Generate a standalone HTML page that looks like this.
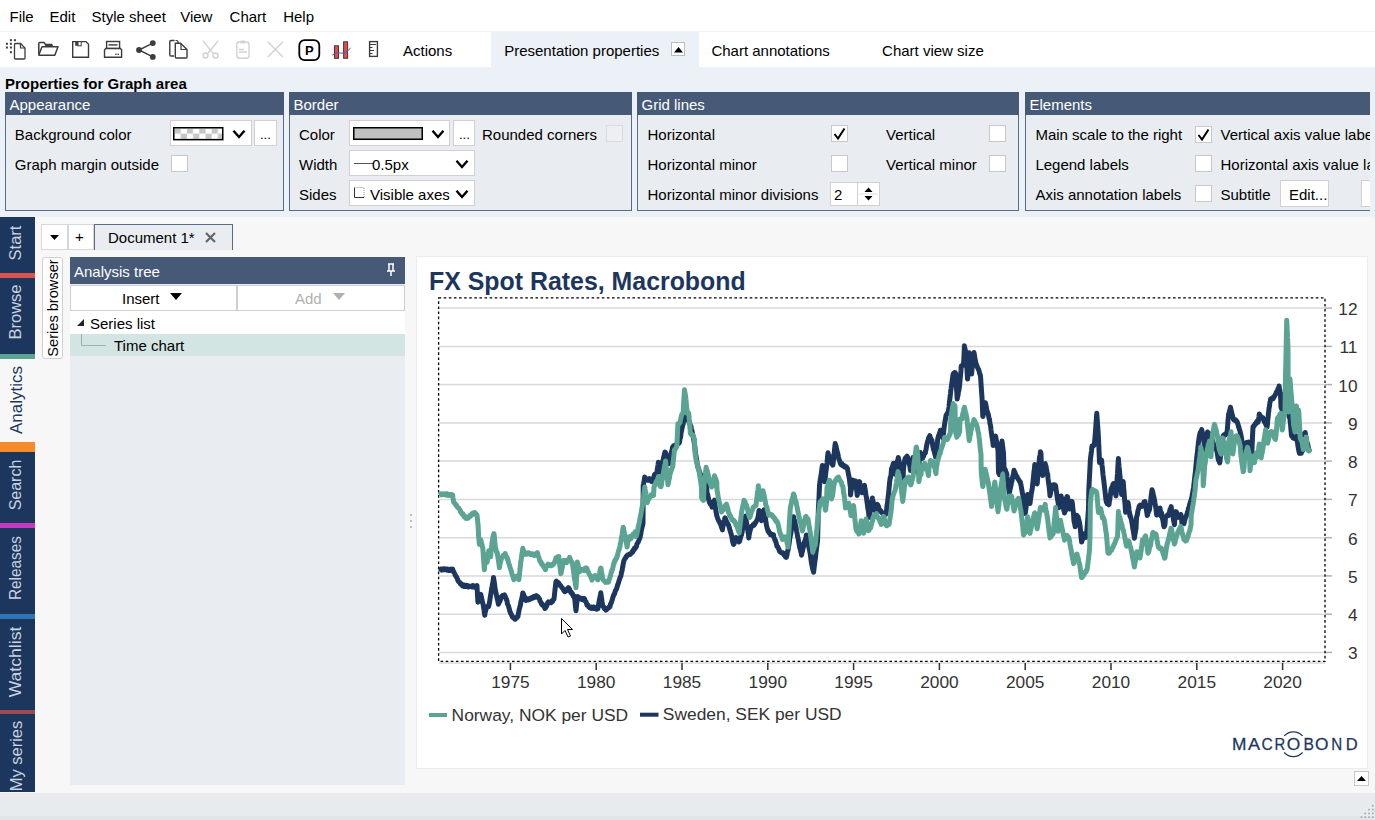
<!DOCTYPE html><html><head><meta charset="utf-8"><style>
html,body{margin:0;padding:0}
body{width:1375px;height:820px;position:relative;overflow:hidden;background:#F7F7F7;font-family:"Liberation Sans",sans-serif;font-size:15px;color:#000}
</style></head><body>
<div style="position:absolute;left:0px;top:0px;width:1375px;height:32px;background:#fff"></div>
<div style="position:absolute;left:0px;top:31px;width:1375px;height:1px;background:#f2f2f2"></div>
<div style="position:absolute;left:0px;top:32px;width:1375px;height:35px;background:#fff"></div>
<div style="position:absolute;left:0px;top:67px;width:1375px;height:150px;background:#ECF0F7"></div>
<div style="position:absolute;left:491px;top:32px;width:208px;height:35px;background:#ECF0F7"></div>
<div style="position:absolute;left:0px;top:793px;width:1375px;height:27px;background:#E8EBEE"></div>
<div style="position:absolute;left:0px;top:816px;width:1375px;height:4px;background:#E2E5E8"></div>
<div style="position:absolute;left:9.50px;top:9.10px;font-size:15px;line-height:15px;font-weight:normal;color:#000;white-space:pre;">File</div>
<div style="position:absolute;left:49.50px;top:9.10px;font-size:15px;line-height:15px;font-weight:normal;color:#000;white-space:pre;">Edit</div>
<div style="position:absolute;left:91.60px;top:9.10px;font-size:15px;line-height:15px;font-weight:normal;color:#000;white-space:pre;">Style sheet</div>
<div style="position:absolute;left:180.20px;top:9.10px;font-size:15px;line-height:15px;font-weight:normal;color:#000;white-space:pre;">View</div>
<div style="position:absolute;left:229.60px;top:9.10px;font-size:15px;line-height:15px;font-weight:normal;color:#000;white-space:pre;">Chart</div>
<div style="position:absolute;left:283.20px;top:9.10px;font-size:15px;line-height:15px;font-weight:normal;color:#000;white-space:pre;">Help</div>
<div style="position:absolute;left:403.00px;top:43.30px;font-size:15px;line-height:15px;font-weight:normal;color:#000;white-space:pre;">Actions</div>
<div style="position:absolute;left:504.20px;top:42.90px;font-size:15px;line-height:15px;font-weight:normal;color:#000;white-space:pre;">Presentation properties</div>
<div style="position:absolute;left:671px;top:42px;width:14px;height:14px;background:#fff;border:1px solid #bbb;box-sizing:border-box"></div>
<svg style="position:absolute;left:671px;top:42px" width="15" height="15"><path d="M3 10.5 L7.5 5 L12 10.5 Z" fill="#000"/></svg>
<div style="position:absolute;left:711.40px;top:43.20px;font-size:15px;line-height:15px;font-weight:normal;color:#000;white-space:pre;">Chart annotations</div>
<div style="position:absolute;left:882.10px;top:43.20px;font-size:15px;line-height:15px;font-weight:normal;color:#000;white-space:pre;">Chart view size</div>
<div style="position:absolute;left:5.00px;top:75.80px;font-size:15px;line-height:15px;font-weight:bold;color:#000;white-space:pre;">Properties for Graph area</div>
<div style="position:absolute;left:5px;top:92px;width:279px;height:119px;background:#E9ECF0;border:1px solid #5B6B86;box-sizing:border-box"></div>
<div style="position:absolute;left:5px;top:92px;width:279px;height:23px;background:#465A78"></div>
<div style="position:absolute;left:9.50px;top:97.00px;font-size:15px;line-height:15px;font-weight:normal;color:#fff;white-space:pre;">Appearance</div>
<div style="position:absolute;left:289px;top:92px;width:343px;height:119px;background:#E9ECF0;border:1px solid #5B6B86;box-sizing:border-box"></div>
<div style="position:absolute;left:289px;top:92px;width:343px;height:23px;background:#465A78"></div>
<div style="position:absolute;left:293.50px;top:97.00px;font-size:15px;line-height:15px;font-weight:normal;color:#fff;white-space:pre;">Border</div>
<div style="position:absolute;left:637px;top:92px;width:382px;height:119px;background:#E9ECF0;border:1px solid #5B6B86;box-sizing:border-box"></div>
<div style="position:absolute;left:637px;top:92px;width:382px;height:23px;background:#465A78"></div>
<div style="position:absolute;left:641.50px;top:97.00px;font-size:15px;line-height:15px;font-weight:normal;color:#fff;white-space:pre;">Grid lines</div>
<div style="position:absolute;left:1025px;top:92px;width:350px;height:119px;background:#E9ECF0;border:1px solid #5B6B86;box-sizing:border-box"></div>
<div style="position:absolute;left:1025px;top:92px;width:350px;height:23px;background:#465A78"></div>
<div style="position:absolute;left:1029.50px;top:97.00px;font-size:15px;line-height:15px;font-weight:normal;color:#fff;white-space:pre;">Elements</div>
<div style="position:absolute;left:1370px;top:67px;width:5px;height:150px;background:#ECF0F7"></div>
<div style="position:absolute;left:14.80px;top:127.30px;font-size:15px;line-height:15px;font-weight:normal;color:#000;white-space:pre;">Background color</div>
<div style="position:absolute;left:14.80px;top:156.90px;font-size:15px;line-height:15px;font-weight:normal;color:#000;white-space:pre;">Graph margin outside</div>
<div style="position:absolute;left:170px;top:120px;width:82px;height:26px;background:#fff;border:1px solid #d0d0d0;box-sizing:border-box"></div>
<svg style="position:absolute;left:173px;top:127px" width="51" height="14"><defs><pattern id="chk" x="1.5" y="1.5" width="12.4" height="10.4" patternUnits="userSpaceOnUse"><rect width="12.4" height="10.4" fill="#fff"/><rect x="0" y="0" width="6.2" height="5.2" fill="#c6c6c6"/><rect x="6.2" y="5.2" width="6.2" height="5.2" fill="#c6c6c6"/></pattern></defs><rect x="0.75" y="0.75" width="49" height="11.9" fill="url(#chk)" stroke="#000" stroke-width="1.5"/></svg>
<svg style="position:absolute;left:232px;top:129px" width="14" height="11"><path d="M1.5 1.8 L7 8 L12.5 1.8" stroke="#000" stroke-width="2.4" fill="none"/></svg>
<div style="position:absolute;left:254px;top:120px;width:23px;height:26px;background:#fff;border:1px solid #d0d0d0;box-sizing:border-box"></div>
<div style="position:absolute;left:260.00px;top:128.00px;font-size:13px;line-height:13px;font-weight:normal;color:#000;white-space:pre;">...</div>
<div style="position:absolute;left:171px;top:155px;width:17px;height:17px;background:#fff;border:1px solid #c8c8c8;box-sizing:border-box"></div>
<div style="position:absolute;left:299.00px;top:127.30px;font-size:15px;line-height:15px;font-weight:normal;color:#000;white-space:pre;">Color</div>
<div style="position:absolute;left:299.00px;top:157.30px;font-size:15px;line-height:15px;font-weight:normal;color:#000;white-space:pre;">Width</div>
<div style="position:absolute;left:299.00px;top:187.30px;font-size:15px;line-height:15px;font-weight:normal;color:#000;white-space:pre;">Sides</div>
<div style="position:absolute;left:349px;top:120px;width:101px;height:26px;background:#fff;border:1px solid #d0d0d0;box-sizing:border-box"></div>
<svg style="position:absolute;left:353px;top:127px" width="70" height="13"><rect x="0.75" y="0.75" width="68.5" height="11.5" fill="#c0c0c0" stroke="#000" stroke-width="1.5"/></svg>
<svg style="position:absolute;left:431px;top:129px" width="14" height="11"><path d="M1.5 1.8 L7 8 L12.5 1.8" stroke="#000" stroke-width="2.4" fill="none"/></svg>
<div style="position:absolute;left:453px;top:120px;width:22px;height:26px;background:#fff;border:1px solid #d0d0d0;box-sizing:border-box"></div>
<div style="position:absolute;left:459.00px;top:128.00px;font-size:13px;line-height:13px;font-weight:normal;color:#000;white-space:pre;">...</div>
<div style="position:absolute;left:349px;top:150px;width:126px;height:26px;background:#fff;border:1px solid #d0d0d0;box-sizing:border-box"></div>
<div style="position:absolute;left:354px;top:163px;width:20px;height:1px;background:#555"></div>
<div style="position:absolute;left:372.00px;top:157.30px;font-size:15px;line-height:15px;font-weight:normal;color:#000;white-space:pre;">0.5px</div>
<svg style="position:absolute;left:455px;top:159px" width="14" height="11"><path d="M1.5 1.8 L7 8 L12.5 1.8" stroke="#000" stroke-width="2.4" fill="none"/></svg>
<div style="position:absolute;left:349px;top:180px;width:126px;height:26px;background:#fff;border:1px solid #d0d0d0;box-sizing:border-box"></div>
<svg style="position:absolute;left:353px;top:187px" width="12" height="12"><path d="M1.5 0.5 V10.5 H11" stroke="#333" stroke-width="1" fill="none"/><path d="M1.5 0.5 H11 V10.5" stroke="#999" stroke-width="1" stroke-dasharray="1 1" fill="none"/></svg>
<div style="position:absolute;left:370.00px;top:187.30px;font-size:15px;line-height:15px;font-weight:normal;color:#000;white-space:pre;">Visible axes</div>
<svg style="position:absolute;left:455px;top:189px" width="14" height="11"><path d="M1.5 1.8 L7 8 L12.5 1.8" stroke="#000" stroke-width="2.4" fill="none"/></svg>
<div style="position:absolute;left:482.00px;top:127.30px;font-size:15px;line-height:15px;font-weight:normal;color:#000;white-space:pre;">Rounded corners</div>
<div style="position:absolute;left:606px;top:125px;width:17px;height:17px;background:#eceff3;border:1px solid #dcdcdc;box-sizing:border-box"></div>
<div style="position:absolute;left:647.50px;top:127.30px;font-size:15px;line-height:15px;font-weight:normal;color:#000;white-space:pre;">Horizontal</div>
<div style="position:absolute;left:647.50px;top:157.30px;font-size:15px;line-height:15px;font-weight:normal;color:#000;white-space:pre;">Horizontal minor</div>
<div style="position:absolute;left:647.50px;top:187.30px;font-size:15px;line-height:15px;font-weight:normal;color:#000;white-space:pre;">Horizontal minor divisions</div>
<div style="position:absolute;left:831px;top:125px;width:17px;height:17px;background:#fff;border:1px solid #c8c8c8;box-sizing:border-box"></div>
<svg style="position:absolute;left:831px;top:125px" width="17" height="17"><path d="M3.5 9 L7 13.5 L13.5 3.5" stroke="#000" stroke-width="2" fill="none"/></svg>
<div style="position:absolute;left:831px;top:155px;width:17px;height:17px;background:#fff;border:1px solid #c8c8c8;box-sizing:border-box"></div>
<div style="position:absolute;left:886.00px;top:127.30px;font-size:15px;line-height:15px;font-weight:normal;color:#000;white-space:pre;">Vertical</div>
<div style="position:absolute;left:886.00px;top:157.30px;font-size:15px;line-height:15px;font-weight:normal;color:#000;white-space:pre;">Vertical minor</div>
<div style="position:absolute;left:989px;top:125px;width:17px;height:17px;background:#fff;border:1px solid #c8c8c8;box-sizing:border-box"></div>
<div style="position:absolute;left:989px;top:155px;width:17px;height:17px;background:#fff;border:1px solid #c8c8c8;box-sizing:border-box"></div>
<div style="position:absolute;left:830px;top:182px;width:28px;height:24px;background:#fff;border:1px solid #d0d0d0;box-sizing:border-box"></div>
<div style="position:absolute;left:834.00px;top:187.30px;font-size:15px;line-height:15px;font-weight:normal;color:#000;white-space:pre;">2</div>
<div style="position:absolute;left:857px;top:182px;width:23px;height:24px;background:#fff;border:1px solid #d0d0d0;box-sizing:border-box"></div>
<svg style="position:absolute;left:857px;top:182px" width="23" height="24"><path d="M7.5 10 L11.5 5.5 L15.5 10 Z M7.5 14 L11.5 18.5 L15.5 14 Z" fill="#000"/><path d="M2 12 H21" stroke="#ddd"/></svg>
<div style="position:absolute;left:1035.40px;top:127.30px;font-size:15px;line-height:15px;font-weight:normal;color:#000;white-space:pre;">Main scale to the right</div>
<div style="position:absolute;left:1035.40px;top:157.30px;font-size:15px;line-height:15px;font-weight:normal;color:#000;white-space:pre;">Legend labels</div>
<div style="position:absolute;left:1035.40px;top:187.30px;font-size:15px;line-height:15px;font-weight:normal;color:#000;white-space:pre;">Axis annotation labels</div>
<div style="position:absolute;left:1195px;top:126px;width:17px;height:17px;background:#fff;border:1px solid #c8c8c8;box-sizing:border-box"></div>
<svg style="position:absolute;left:1195px;top:126px" width="17" height="17"><path d="M3.5 9 L7 13.5 L13.5 3.5" stroke="#000" stroke-width="2" fill="none"/></svg>
<div style="position:absolute;left:1195px;top:155px;width:17px;height:17px;background:#fff;border:1px solid #c8c8c8;box-sizing:border-box"></div>
<div style="position:absolute;left:1195px;top:185px;width:17px;height:17px;background:#fff;border:1px solid #c8c8c8;box-sizing:border-box"></div>
<div style="position:absolute;left:1220.50px;top:127.30px;font-size:15px;line-height:15px;font-weight:normal;color:#000;white-space:pre;">Vertical axis value labels</div>
<div style="position:absolute;left:1220.50px;top:157.30px;font-size:15px;line-height:15px;font-weight:normal;color:#000;white-space:pre;">Horizontal axis value labels</div>
<div style="position:absolute;left:1220.50px;top:187.30px;font-size:15px;line-height:15px;font-weight:normal;color:#000;white-space:pre;">Subtitle</div>
<div style="position:absolute;left:1280px;top:180px;width:49px;height:27px;background:#fff;border:1px solid #d0d0d0;box-sizing:border-box"></div>
<div style="position:absolute;left:1289.00px;top:187.30px;font-size:15px;line-height:15px;font-weight:normal;color:#000;white-space:pre;">Edit...</div>
<div style="position:absolute;left:1361px;top:180px;width:20px;height:27px;background:#fff;border:1px solid #d0d0d0;box-sizing:border-box"></div>
<div style="position:absolute;left:1370px;top:88px;width:5px;height:130px;background:#ECF0F7"></div>
<svg style="position:absolute;left:0;top:32px" width="400" height="35" viewBox="0 32 400 35">
<g fill="#3c3c3c">
<rect x="9.9" y="39.2" width="2" height="2"/><rect x="13.9" y="39.2" width="2" height="2"/>
<rect x="5.9" y="42.8" width="2" height="2"/><rect x="9.9" y="42.8" width="2" height="2"/>
<rect x="5.9" y="46.5" width="2" height="2"/><rect x="9.9" y="46.5" width="2" height="2"/>
<rect x="9.9" y="51.2" width="2" height="2"/>
</g>
<path d="M14.5 44.5 Q14.5 43.5 15.5 43.5 H20.5 L25 48 V58 Q25 59 24 59 H15.5 Q14.5 59 14.5 58 Z" fill="#fff" stroke="#3c3c3c" stroke-width="1.3"/>
<path d="M20.5 43.5 V48 H25" fill="none" stroke="#3c3c3c" stroke-width="1.2"/>
<path d="M38.8 54.5 V43.5 Q38.8 42.6 39.7 42.6 H44 L45.5 44.5 H51.5 L52.5 46" fill="none" stroke="#3c3c3c" stroke-width="1.5"/>
<path d="M45.5 44.5 H51.5 L52.5 46 H45 Z" fill="#3c3c3c"/>
<path d="M38.8 55 L42 46.8 H58 L54.8 55.3 H39.5 Z" fill="#fff" stroke="#3c3c3c" stroke-width="1.5" stroke-linejoin="round"/>
<path d="M72.7 41.6 H86 L88.5 44.2 V57.3 H72.7 Z" fill="#fff" stroke="#3c3c3c" stroke-width="1.4"/>
<rect x="75.2" y="41.6" width="2.8" height="4.2" fill="#3c3c3c"/><rect x="78" y="41.6" width="3.2" height="4.2" fill="#fff" stroke="#3c3c3c" stroke-width="1"/>
<rect x="106.6" y="41.5" width="13" height="7" fill="#fff" stroke="#3c3c3c" stroke-width="1.4"/>
<rect x="108.5" y="44.2" width="9" height="1.4" fill="#3c3c3c"/>
<path d="M104.5 57.3 V50 L105.8 48.5 H120.5 L121.6 50 V57.3 Z" fill="#fff" stroke="#3c3c3c" stroke-width="1.4"/>
<rect x="115.2" y="53.6" width="1.4" height="1.4" fill="#3c3c3c"/><rect x="117.6" y="53.6" width="1.4" height="1.4" fill="#3c3c3c"/>
<path d="M152.8 43.1 L139 50 L152.8 56.9" fill="none" stroke="#3c3c3c" stroke-width="1.5"/>
<circle cx="152.8" cy="43.1" r="2.9" fill="#3c3c3c"/><circle cx="139" cy="50" r="2.9" fill="#3c3c3c"/><circle cx="152.8" cy="56.9" r="2.9" fill="#3c3c3c"/>
<path d="M174.5 40.5 H171 Q169.8 40.5 169.8 41.7 V54.8 Q169.8 56 171 56 H174" fill="#fff" stroke="#3c3c3c" stroke-width="1.4"/>
<path d="M175.5 40.5 H177 L178 41.5 V43" fill="none" stroke="#3c3c3c" stroke-width="1.2"/>
<path d="M175.3 43.2 H180.5 L187 49.5 V57 Q187 58 186 58 H176.3 Q175.3 58 175.3 57 Z" fill="#fff" stroke="#3c3c3c" stroke-width="1.4"/>
<path d="M181 43.2 V49.5 H187" fill="none" stroke="#3c3c3c" stroke-width="1.2"/>
<g stroke="#d2d2d2" stroke-width="1.4" fill="none">
<path d="M202.8 40.6 L214 54.5 M218.2 40.6 L207 54.5"/>
<circle cx="205.5" cy="55.5" r="2.5"/><circle cx="215.5" cy="55.5" r="2.5"/>
<rect x="236.8" y="42" width="12.2" height="16.3" rx="2.5"/>
<path d="M239 49.5 H244 M239 52 H247"/>
<path d="M267.8 41.7 L283 56.9 M283 41.7 L267.8 56.9"/>
</g>
<rect x="240.5" y="40.5" width="4.5" height="3" fill="#d2d2d2"/>
<rect x="299.3" y="40.1" width="20" height="20" rx="5.3" fill="#fff" stroke="#000" stroke-width="1.8"/>
<text x="309.3" y="54.7" text-anchor="middle" font-family="Liberation Sans" font-weight="bold" font-size="13" fill="#000">P</text>
<rect x="334.5" y="45.8" width="4" height="12.5" fill="#f04545" stroke="#3c3c3c" stroke-width="1"/>
<rect x="343.6" y="41.8" width="4" height="16.5" fill="#f04545" stroke="#3c3c3c" stroke-width="1"/>
<path d="M332.3 55 Q337 51.5 341 53 Q346 54.5 350.5 47.8" fill="none" stroke="#4060c0" stroke-width="1"/>
<rect x="369.6" y="41.6" width="7.8" height="14.8" fill="#fff" stroke="#3c3c3c" stroke-width="1.4"/>
<path d="M369.6 44.5 H376 M369.6 47.5 H372.5 M369.6 50.5 H374 M369.6 53.5 H372.5" stroke="#3c3c3c" stroke-width="1"/>
</svg>
<div style="position:absolute;left:0px;top:217px;width:35px;height:575px;background:#1C365E"></div>
<svg style="position:absolute;left:1350px;top:800px" width="25" height="20"><rect x="22.0" y="5.0" width="1.6" height="1.6" fill="#9AA7B8"/><rect x="22.0" y="8.8" width="1.6" height="1.6" fill="#9AA7B8"/><rect x="18.2" y="8.8" width="1.6" height="1.6" fill="#9AA7B8"/><rect x="22.0" y="12.6" width="1.6" height="1.6" fill="#9AA7B8"/><rect x="18.2" y="12.6" width="1.6" height="1.6" fill="#9AA7B8"/><rect x="14.4" y="12.6" width="1.6" height="1.6" fill="#9AA7B8"/><rect x="22.0" y="16.4" width="1.6" height="1.6" fill="#9AA7B8"/><rect x="18.2" y="16.4" width="1.6" height="1.6" fill="#9AA7B8"/><rect x="14.4" y="16.4" width="1.6" height="1.6" fill="#9AA7B8"/><rect x="10.600000000000001" y="16.4" width="1.6" height="1.6" fill="#9AA7B8"/></svg>
<div style="position:absolute;left:0px;top:358px;width:35px;height:84px;background:#F7F7F7"></div>
<div style="position:absolute;left:0px;top:273px;width:35px;height:4.5px;background:#D9534F"></div>
<div style="position:absolute;left:0px;top:354px;width:35px;height:4.5px;background:#5BA392"></div>
<div style="position:absolute;left:0px;top:442px;width:35px;height:10px;background:#F68B2C"></div>
<div style="position:absolute;left:0px;top:523px;width:35px;height:5px;background:#C13BC0"></div>
<div style="position:absolute;left:0px;top:614px;width:35px;height:5px;background:#2F74B5"></div>
<div style="position:absolute;left:0px;top:709.5px;width:35px;height:4.5px;background:#9B4A52"></div>
<div style="position:absolute;left:16px;top:242.5px;width:0;height:0"><div style="position:absolute;left:0;top:0;transform:translate(-50%,-50%) rotate(-90deg) scaleX(1.03);font-size:16px;line-height:16px;color:#C9D2DE;white-space:pre">Start</div></div>
<div style="position:absolute;left:16px;top:312.4px;width:0;height:0"><div style="position:absolute;left:0;top:0;transform:translate(-50%,-50%) rotate(-90deg) scaleX(1.03);font-size:16px;line-height:16px;color:#C9D2DE;white-space:pre">Browse</div></div>
<div style="position:absolute;left:16px;top:399.8px;width:0;height:0"><div style="position:absolute;left:0;top:0;transform:translate(-50%,-50%) rotate(-90deg) scaleX(1.0);font-size:17px;line-height:17px;color:#1C365E;white-space:pre">Analytics</div></div>
<div style="position:absolute;left:16px;top:485px;width:0;height:0"><div style="position:absolute;left:0;top:0;transform:translate(-50%,-50%) rotate(-90deg) scaleX(1.0);font-size:16px;line-height:16px;color:#C9D2DE;white-space:pre">Search</div></div>
<div style="position:absolute;left:16px;top:568px;width:0;height:0"><div style="position:absolute;left:0;top:0;transform:translate(-50%,-50%) rotate(-90deg) scaleX(0.96);font-size:16px;line-height:16px;color:#C9D2DE;white-space:pre">Releases</div></div>
<div style="position:absolute;left:16px;top:661.5px;width:0;height:0"><div style="position:absolute;left:0;top:0;transform:translate(-50%,-50%) rotate(-90deg) scaleX(1.1);font-size:16px;line-height:16px;color:#C9D2DE;white-space:pre">Watchlist</div></div>
<div style="position:absolute;left:16px;top:756px;width:0;height:0"><div style="position:absolute;left:0;top:0;transform:translate(-50%,-50%) rotate(-90deg) scaleX(1.0);font-size:16.5px;line-height:16.5px;color:#C9D2DE;white-space:pre">My series</div></div>
<div style="position:absolute;left:41px;top:224px;width:27px;height:26px;background:#fff;border:1px solid #d8d8d8;box-sizing:border-box"></div>
<svg style="position:absolute;left:41px;top:224px" width="27" height="26"><path d="M9 11 L18 11 L13.5 16 Z" fill="#000"/></svg>
<div style="position:absolute;left:68px;top:224px;width:26px;height:26px;background:#fff;border:1px solid #d8d8d8;box-sizing:border-box"></div>
<div style="position:absolute;left:75.00px;top:229.30px;font-size:15px;line-height:15px;font-weight:normal;color:#000;white-space:pre;">+</div>
<div style="position:absolute;left:94px;top:224px;width:139px;height:26px;background:#E9ECF0;border:1px solid #5B6B86;border-bottom:none;box-sizing:border-box"></div>
<div style="position:absolute;left:108.00px;top:230.30px;font-size:15px;line-height:15px;font-weight:normal;color:#000;white-space:pre;">Document 1*</div>
<svg style="position:absolute;left:203px;top:230px" width="16" height="16"><path d="M3 3 L12 12 M12 3 L3 12" stroke="#666" stroke-width="2.2"/></svg>
<div style="position:absolute;left:42px;top:257px;width:21px;height:102px;background:#fff;border:1px solid #d0d0d0;border-radius:3px;box-sizing:border-box"></div>
<div style="position:absolute;left:52.5px;top:307.5px;width:0;height:0"><div style="position:absolute;left:0;top:0;transform:translate(-50%,-50%) rotate(-90deg) scaleX(1.0);font-size:14.6px;line-height:14.6px;color:#000;white-space:pre">Series browser</div></div>
<div style="position:absolute;left:70px;top:257px;width:335px;height:528px;background:#E9ECF0"></div>
<div style="position:absolute;left:70px;top:257px;width:335px;height:27px;background:#465A78"></div>
<div style="position:absolute;left:74.00px;top:264.30px;font-size:15px;line-height:15px;font-weight:normal;color:#fff;white-space:pre;">Analysis tree</div>
<svg style="position:absolute;left:384px;top:262px" width="14" height="16"><path d="M4 2 H10 M5 2 V9 H9 V2 M3 9 H11 M7 9 V14" stroke="#fff" stroke-width="1.5" fill="none"/></svg>
<div style="position:absolute;left:70px;top:285px;width:167px;height:26px;background:#fff;border:1px solid #cfcfcf;box-sizing:border-box"></div>
<div style="position:absolute;left:237px;top:285px;width:168px;height:26px;background:#fff;border:1px solid #cfcfcf;box-sizing:border-box"></div>
<div style="position:absolute;left:122.00px;top:291.30px;font-size:15px;line-height:15px;font-weight:normal;color:#000;white-space:pre;">Insert</div>
<svg style="position:absolute;left:168px;top:290px" width="16" height="14"><path d="M2 3 H14 L8 10 Z" fill="#000"/></svg>
<div style="position:absolute;left:295.00px;top:291.30px;font-size:15px;line-height:15px;font-weight:normal;color:#b0b0b0;white-space:pre;">Add</div>
<svg style="position:absolute;left:331px;top:290px" width="16" height="14"><path d="M2 3 H14 L8 10 Z" fill="#b0b0b0"/></svg>
<div style="position:absolute;left:70px;top:311px;width:335px;height:23px;background:#fff"></div>
<div style="position:absolute;left:70px;top:334px;width:335px;height:22px;background:#D3E5E2"></div>
<svg style="position:absolute;left:74px;top:316px" width="12" height="12"><path d="M3 10 H10 V3 Z" fill="#222"/></svg>
<div style="position:absolute;left:90.00px;top:316.30px;font-size:15px;line-height:15px;font-weight:normal;color:#000;white-space:pre;">Series list</div>
<svg style="position:absolute;left:80px;top:334px" width="30" height="20"><path d="M1.5 0 V11.5 H26" stroke="#aaa" stroke-width="1" fill="none"/></svg>
<div style="position:absolute;left:114.00px;top:338.30px;font-size:15px;line-height:15px;font-weight:normal;color:#000;white-space:pre;">Time chart</div>
<svg style="position:absolute;left:408px;top:512px" width="6" height="20"><circle cx="3" cy="3" r="1" fill="#aaa"/><circle cx="3" cy="9" r="1" fill="#aaa"/><circle cx="3" cy="15" r="1" fill="#aaa"/></svg>
<div style="position:absolute;left:416px;top:256px;width:952px;height:513px;background:#fff;border:1px solid #ECECEC;box-sizing:border-box"></div>
<div style="position:absolute;left:1354px;top:771px;width:15px;height:15px;background:#fff;border:1px solid #c8c8c8;box-sizing:border-box"></div>
<svg style="position:absolute;left:1354px;top:771px" width="15" height="15"><path d="M3 10 L7.5 5 L12 10 Z" fill="#000"/></svg>
<svg style="position:absolute;left:0;top:0" width="1375" height="820">
<line x1="439" y1="652.4" x2="1325" y2="652.4" stroke="#D9D9D9" stroke-width="1.5"/>
<line x1="1325" y1="652.4" x2="1332" y2="652.4" stroke="#B0B0B0" stroke-width="1.5"/>
<text x="1357.5" y="659.3" text-anchor="end" font-family="Liberation Sans" font-size="17.3" fill="#333">3</text>
<line x1="439" y1="614.2" x2="1325" y2="614.2" stroke="#D9D9D9" stroke-width="1.5"/>
<line x1="1325" y1="614.2" x2="1332" y2="614.2" stroke="#B0B0B0" stroke-width="1.5"/>
<text x="1357.5" y="621.1" text-anchor="end" font-family="Liberation Sans" font-size="17.3" fill="#333">4</text>
<line x1="439" y1="575.9" x2="1325" y2="575.9" stroke="#D9D9D9" stroke-width="1.5"/>
<line x1="1325" y1="575.9" x2="1332" y2="575.9" stroke="#B0B0B0" stroke-width="1.5"/>
<text x="1357.5" y="582.8" text-anchor="end" font-family="Liberation Sans" font-size="17.3" fill="#333">5</text>
<line x1="439" y1="537.7" x2="1325" y2="537.7" stroke="#D9D9D9" stroke-width="1.5"/>
<line x1="1325" y1="537.7" x2="1332" y2="537.7" stroke="#B0B0B0" stroke-width="1.5"/>
<text x="1357.5" y="544.6" text-anchor="end" font-family="Liberation Sans" font-size="17.3" fill="#333">6</text>
<line x1="439" y1="499.4" x2="1325" y2="499.4" stroke="#D9D9D9" stroke-width="1.5"/>
<line x1="1325" y1="499.4" x2="1332" y2="499.4" stroke="#B0B0B0" stroke-width="1.5"/>
<text x="1357.5" y="506.3" text-anchor="end" font-family="Liberation Sans" font-size="17.3" fill="#333">7</text>
<line x1="439" y1="461.1" x2="1325" y2="461.1" stroke="#D9D9D9" stroke-width="1.5"/>
<line x1="1325" y1="461.1" x2="1332" y2="461.1" stroke="#B0B0B0" stroke-width="1.5"/>
<text x="1357.5" y="468.0" text-anchor="end" font-family="Liberation Sans" font-size="17.3" fill="#333">8</text>
<line x1="439" y1="422.9" x2="1325" y2="422.9" stroke="#D9D9D9" stroke-width="1.5"/>
<line x1="1325" y1="422.9" x2="1332" y2="422.9" stroke="#B0B0B0" stroke-width="1.5"/>
<text x="1357.5" y="429.8" text-anchor="end" font-family="Liberation Sans" font-size="17.3" fill="#333">9</text>
<line x1="439" y1="384.6" x2="1325" y2="384.6" stroke="#D9D9D9" stroke-width="1.5"/>
<line x1="1325" y1="384.6" x2="1332" y2="384.6" stroke="#B0B0B0" stroke-width="1.5"/>
<text x="1357.5" y="391.5" text-anchor="end" font-family="Liberation Sans" font-size="17.3" fill="#333">10</text>
<line x1="439" y1="346.4" x2="1325" y2="346.4" stroke="#D9D9D9" stroke-width="1.5"/>
<line x1="1325" y1="346.4" x2="1332" y2="346.4" stroke="#B0B0B0" stroke-width="1.5"/>
<text x="1357.5" y="353.3" text-anchor="end" font-family="Liberation Sans" font-size="17.3" fill="#333">11</text>
<line x1="439" y1="308.1" x2="1325" y2="308.1" stroke="#D9D9D9" stroke-width="1.5"/>
<line x1="1325" y1="308.1" x2="1332" y2="308.1" stroke="#B0B0B0" stroke-width="1.5"/>
<text x="1357.5" y="315.0" text-anchor="end" font-family="Liberation Sans" font-size="17.3" fill="#333">12</text>
<line x1="439" y1="663" x2="1325" y2="663" stroke="#D9D9D9" stroke-width="1.5"/>
<line x1="510.4" y1="663" x2="510.4" y2="670" stroke="#333" stroke-width="1.5"/>
<text x="510.4" y="687.6" text-anchor="middle" font-family="Liberation Sans" font-size="17.3" fill="#333">1975</text>
<line x1="596.2" y1="663" x2="596.2" y2="670" stroke="#333" stroke-width="1.5"/>
<text x="596.2" y="687.6" text-anchor="middle" font-family="Liberation Sans" font-size="17.3" fill="#333">1980</text>
<line x1="682.0" y1="663" x2="682.0" y2="670" stroke="#333" stroke-width="1.5"/>
<text x="682.0" y="687.6" text-anchor="middle" font-family="Liberation Sans" font-size="17.3" fill="#333">1985</text>
<line x1="767.8" y1="663" x2="767.8" y2="670" stroke="#333" stroke-width="1.5"/>
<text x="767.8" y="687.6" text-anchor="middle" font-family="Liberation Sans" font-size="17.3" fill="#333">1990</text>
<line x1="853.6" y1="663" x2="853.6" y2="670" stroke="#333" stroke-width="1.5"/>
<text x="853.6" y="687.6" text-anchor="middle" font-family="Liberation Sans" font-size="17.3" fill="#333">1995</text>
<line x1="939.4" y1="663" x2="939.4" y2="670" stroke="#333" stroke-width="1.5"/>
<text x="939.4" y="687.6" text-anchor="middle" font-family="Liberation Sans" font-size="17.3" fill="#333">2000</text>
<line x1="1025.2" y1="663" x2="1025.2" y2="670" stroke="#333" stroke-width="1.5"/>
<text x="1025.2" y="687.6" text-anchor="middle" font-family="Liberation Sans" font-size="17.3" fill="#333">2005</text>
<line x1="1111.0" y1="663" x2="1111.0" y2="670" stroke="#333" stroke-width="1.5"/>
<text x="1111.0" y="687.6" text-anchor="middle" font-family="Liberation Sans" font-size="17.3" fill="#333">2010</text>
<line x1="1196.8" y1="663" x2="1196.8" y2="670" stroke="#333" stroke-width="1.5"/>
<text x="1196.8" y="687.6" text-anchor="middle" font-family="Liberation Sans" font-size="17.3" fill="#333">2015</text>
<line x1="1282.6" y1="663" x2="1282.6" y2="670" stroke="#333" stroke-width="1.5"/>
<text x="1282.6" y="687.6" text-anchor="middle" font-family="Liberation Sans" font-size="17.3" fill="#333">2020</text>
<rect x="438.6" y="297.8" width="886.4" height="363.6" fill="none" stroke="#000" stroke-width="1.3" stroke-dasharray="2.6 2.5"/>
<path d="M440.9 569.4 L441.0 569.2 L441.5 570.0 L442.0 569.0 L442.5 569.8 L443.0 569.5 L443.5 569.0 L444.0 569.7 L444.5 569.0 L445.0 569.6 L445.5 569.0 L446.0 569.1 L446.5 569.6 L447.0 570.2 L447.5 569.1 L448.0 569.3 L448.5 569.9 L449.0 570.4 L449.5 569.8 L450.0 569.6 L450.5 570.5 L451.0 569.0 L451.5 570.3 L452.0 569.4 L452.5 569.2 L452.6 569.1 L453.0 570.3 L453.5 572.1 L454.0 572.1 L454.5 573.7 L455.0 574.8 L455.5 575.4 L456.0 576.6 L456.5 576.9 L457.0 577.9 L457.5 579.1 L458.0 580.9 L458.4 581.3 L458.5 581.2 L459.0 582.1 L459.5 582.4 L460.0 582.7 L460.5 584.0 L461.0 584.3 L461.5 584.1 L462.0 585.1 L462.3 585.4 L462.5 586.0 L463.0 585.8 L463.5 585.2 L464.0 586.4 L464.5 585.1 L465.0 585.7 L465.5 586.4 L466.0 585.5 L466.5 586.1 L467.0 585.5 L467.2 586.6 L467.5 586.7 L468.0 586.4 L468.5 586.9 L469.0 586.0 L469.5 586.6 L470.0 586.5 L470.5 586.4 L471.0 586.2 L471.5 586.8 L472.0 587.0 L472.1 586.3 L472.5 586.6 L473.0 585.6 L473.5 586.6 L474.0 586.5 L474.5 587.1 L475.0 586.8 L475.5 586.0 L476.0 586.1 L476.5 586.6 L477.0 585.5 L477.0 586.9 L477.5 595.0 L477.9 602.2 L478.0 602.0 L478.5 601.8 L479.0 599.4 L479.5 598.3 L480.0 597.2 L480.5 596.6 L480.9 594.4 L481.0 595.6 L481.5 597.7 L482.0 600.2 L482.5 602.1 L482.8 603.5 L483.0 603.7 L483.5 606.9 L484.0 609.8 L484.5 613.6 L484.8 615.3 L485.0 613.1 L485.5 611.1 L486.0 609.2 L486.5 607.2 L486.7 606.8 L487.0 606.9 L487.5 606.4 L488.0 606.0 L488.5 606.7 L488.7 606.6 L489.0 604.9 L489.5 602.5 L490.0 599.1 L490.5 595.8 L491.0 592.9 L491.5 590.0 L491.6 588.5 L492.0 587.4 L492.5 584.2 L493.0 581.4 L493.5 578.2 L493.5 577.4 L494.0 580.6 L494.5 583.6 L495.0 588.0 L495.5 590.5 L495.5 590.5 L496.0 593.1 L496.5 595.4 L497.0 598.0 L497.5 599.8 L498.0 602.1 L498.4 604.2 L498.5 604.0 L499.0 603.1 L499.5 601.2 L500.0 601.2 L500.5 599.5 L501.0 597.4 L501.3 596.6 L501.5 596.7 L502.0 596.4 L502.5 595.7 L503.0 596.5 L503.5 596.4 L504.0 595.2 L504.3 595.1 L504.5 594.9 L505.0 595.9 L505.5 597.3 L506.0 598.2 L506.2 599.5 L506.5 599.4 L507.0 600.8 L507.5 604.0 L508.0 605.0 L508.5 606.0 L509.0 608.3 L509.1 608.0 L509.5 609.7 L510.0 611.8 L510.5 612.9 L511.0 614.0 L511.5 614.6 L512.0 616.1 L512.1 616.0 L512.5 617.3 L513.0 617.2 L513.5 617.9 L514.0 617.5 L514.5 617.7 L515.0 619.0 L515.0 619.3 L515.5 618.7 L516.0 618.3 L516.5 618.0 L517.0 617.5 L517.5 616.4 L517.9 616.6 L518.0 615.9 L518.5 612.9 L519.0 610.4 L519.5 608.3 L519.9 606.4 L520.0 606.5 L520.5 604.6 L521.0 601.4 L521.5 599.9 L522.0 597.6 L522.5 595.2 L522.8 592.9 L523.0 593.2 L523.5 594.3 L524.0 595.5 L524.5 596.6 L525.0 598.5 L525.5 600.1 L525.7 600.5 L526.0 599.9 L526.5 600.0 L527.0 600.1 L527.5 598.8 L528.0 599.6 L528.5 599.9 L529.0 599.6 L529.5 599.4 L529.6 598.9 L530.0 598.3 L530.5 599.0 L531.0 598.0 L531.5 598.5 L532.0 598.5 L532.5 597.4 L533.0 597.1 L533.5 597.8 L533.5 597.4 L534.0 596.4 L534.5 596.2 L535.0 596.1 L535.5 597.2 L536.0 596.9 L536.5 595.7 L537.0 596.7 L537.4 596.8 L537.5 596.4 L538.0 596.8 L538.5 598.0 L539.0 598.2 L539.5 598.9 L540.0 601.3 L540.5 601.7 L541.0 602.4 L541.3 603.6 L541.5 603.0 L542.0 604.5 L542.5 605.2 L543.0 604.9 L543.5 605.7 L544.0 606.6 L544.5 607.2 L545.0 608.5 L545.2 608.3 L545.5 608.0 L546.0 606.3 L546.5 606.4 L547.0 604.4 L547.5 603.4 L548.0 602.4 L548.1 602.6 L548.5 601.9 L549.0 602.9 L549.5 602.4 L550.0 602.6 L550.5 602.7 L551.0 602.1 L551.1 602.8 L551.5 601.8 L552.0 600.9 L552.5 601.5 L553.0 599.8 L553.5 599.6 L554.0 599.3 L554.5 594.6 L555.0 589.7 L555.5 585.5 L556.0 581.5 L556.0 581.9 L556.5 581.2 L557.0 582.2 L557.5 582.1 L558.0 582.4 L558.5 583.6 L558.9 583.4 L559.0 583.6 L559.5 584.6 L560.0 585.5 L560.5 585.4 L561.0 586.4 L561.5 586.9 L561.8 587.3 L562.0 587.8 L562.5 588.1 L563.0 588.9 L563.5 589.5 L564.0 590.9 L564.5 591.2 L564.7 591.8 L565.0 591.7 L565.5 590.2 L566.0 590.3 L566.5 590.6 L567.0 590.0 L567.5 588.5 L568.0 588.1 L568.5 588.3 L568.6 587.6 L569.0 588.5 L569.5 589.0 L570.0 590.8 L570.5 591.8 L571.0 592.8 L571.5 592.5 L571.6 593.5 L572.0 594.0 L572.5 593.8 L573.0 595.7 L573.5 596.5 L574.0 595.9 L574.5 597.7 L574.5 597.0 L575.0 601.5 L575.5 606.7 L576.0 610.8 L576.0 610.1 L576.5 606.0 L577.0 601.1 L577.4 596.8 L577.5 596.6 L578.0 597.1 L578.5 598.1 L579.0 597.3 L579.5 598.5 L580.0 598.7 L580.3 598.2 L580.5 598.7 L581.0 599.2 L581.5 599.0 L582.0 598.3 L582.5 599.8 L583.0 599.4 L583.5 599.7 L584.0 598.3 L584.2 598.6 L584.5 598.8 L585.0 601.0 L585.5 601.1 L586.0 601.9 L586.5 603.4 L587.0 605.2 L587.2 605.3 L587.5 604.8 L588.0 605.1 L588.5 606.8 L589.0 606.8 L589.5 607.5 L590.0 607.0 L590.1 607.0 L590.5 608.1 L591.0 607.6 L591.5 607.1 L592.0 608.5 L592.5 608.0 L593.0 608.2 L593.5 607.1 L594.0 608.3 L594.0 607.1 L594.5 608.5 L595.0 607.9 L595.5 607.9 L596.0 608.3 L596.5 609.1 L597.0 608.1 L597.5 608.0 L597.9 608.8 L598.0 607.7 L598.5 604.8 L599.0 602.3 L599.5 599.4 L600.0 597.0 L600.5 594.5 L600.8 592.8 L601.0 594.8 L601.5 597.6 L602.0 601.4 L602.5 604.4 L602.8 606.5 L603.0 606.2 L603.5 607.1 L604.0 607.2 L604.5 608.9 L605.0 609.1 L605.5 609.0 L605.7 609.7 L606.0 610.2 L606.5 608.5 L607.0 609.2 L607.5 608.2 L608.0 608.0 L608.5 608.1 L609.0 607.1 L609.5 606.9 L609.6 607.1 L610.0 606.5 L610.5 604.1 L611.0 603.6 L611.5 602.0 L612.0 600.6 L612.5 598.9 L612.5 598.7 L613.0 597.0 L613.5 595.8 L614.0 594.3 L614.5 594.1 L615.0 592.0 L615.4 590.6 L615.5 590.4 L616.0 590.2 L616.5 588.9 L617.0 587.3 L617.5 585.3 L618.0 583.9 L618.4 583.0 L618.5 582.9 L619.0 580.7 L619.5 579.5 L620.0 577.6 L620.5 577.0 L621.0 575.4 L621.3 573.7 L621.5 572.2 L622.0 571.1 L622.5 567.7 L623.0 565.4 L623.5 562.5 L624.0 560.8 L624.2 559.9 L624.5 559.6 L625.0 558.4 L625.5 558.3 L626.0 556.8 L626.5 556.6 L627.0 555.6 L627.1 555.9 L627.5 555.1 L628.0 554.7 L628.5 554.9 L629.0 554.4 L629.5 554.6 L630.0 554.2 L630.1 554.5 L630.5 553.9 L631.0 553.5 L631.5 553.3 L632.0 552.0 L632.0 551.9 L632.5 552.3 L633.0 550.3 L633.5 550.6 L634.0 549.8 L634.5 548.1 L635.0 548.8 L635.0 548.8 L635.5 547.7 L636.0 547.2 L636.5 546.1 L637.0 543.8 L637.5 543.2 L637.9 542.3 L638.0 542.5 L638.5 541.3 L639.0 540.1 L639.5 538.5 L640.0 537.8 L640.5 535.2 L640.8 533.9 L641.0 532.3 L641.5 529.7 L642.0 527.6 L642.5 525.7 L642.8 524.2 L643.0 524.2 L643.2 485.3 L643.5 483.9 L643.7 482.8 L644.0 481.5 L644.5 478.7 L644.7 476.9 L644.8 477.7 L645.0 477.9 L645.5 478.1 L645.6 478.3 L646.0 479.1 L646.5 478.8 L646.6 480.0 L647.0 479.7 L647.2 479.7 L647.5 479.8 L648.0 480.2 L648.5 479.1 L648.8 479.7 L649.0 480.0 L649.5 478.9 L649.6 478.6 L650.0 479.3 L650.5 480.3 L650.5 480.5 L651.0 480.9 L651.5 481.6 L652.0 481.3 L652.5 480.1 L653.0 478.9 L653.5 478.4 L654.0 476.4 L654.4 475.7 L654.5 474.7 L655.0 474.1 L655.2 474.2 L655.5 474.4 L656.0 473.8 L656.5 473.1 L656.8 472.1 L657.0 471.2 L657.5 468.1 L658.0 465.1 L658.4 462.2 L658.5 463.8 L659.0 464.7 L659.5 468.0 L660.0 469.9 L660.5 470.4 L660.8 472.3 L661.0 471.8 L661.5 469.4 L662.0 465.9 L662.5 463.0 L663.0 460.2 L663.2 460.3 L663.5 457.9 L664.0 456.4 L664.5 453.6 L665.0 452.1 L665.1 452.3 L665.5 452.5 L666.0 455.5 L666.5 456.9 L667.0 459.4 L667.2 459.9 L667.5 460.1 L668.0 462.6 L668.5 463.5 L668.8 463.6 L669.0 462.6 L669.5 460.9 L670.0 458.3 L670.4 456.1 L670.5 455.4 L671.0 453.8 L671.5 451.7 L672.0 450.5 L672.5 447.2 L672.8 447.2 L673.0 447.2 L673.5 445.7 L674.0 446.7 L674.5 446.0 L675.0 446.0 L675.2 444.9 L675.5 444.9 L676.0 444.7 L676.5 445.5 L677.0 444.6 L677.5 444.1 L678.0 444.0 L678.5 443.5 L679.0 443.0 L679.2 443.0 L679.5 442.5 L680.0 439.0 L680.5 437.4 L681.0 433.6 L681.5 431.0 L681.6 430.8 L682.0 428.3 L682.5 426.1 L683.0 424.5 L683.2 423.4 L683.5 421.8 L684.0 419.0 L684.5 417.0 L684.8 415.5 L685.0 415.2 L685.5 416.3 L686.0 416.0 L686.5 417.9 L687.0 418.2 L687.5 419.5 L688.0 420.2 L688.5 420.4 L688.8 420.5 L689.0 422.4 L689.5 422.5 L690.0 424.4 L690.5 425.5 L691.0 426.7 L691.2 428.0 L691.5 429.8 L692.0 430.9 L692.5 433.9 L693.0 435.7 L693.5 438.4 L693.6 438.6 L694.0 441.2 L694.5 444.9 L695.0 448.6 L695.5 453.4 L696.0 456.4 L696.5 458.6 L697.0 462.4 L697.5 465.2 L698.0 467.0 L698.4 468.6 L698.5 469.0 L699.0 470.1 L699.5 471.9 L700.0 472.8 L700.5 474.4 L700.8 475.2 L701.0 476.1 L701.5 477.6 L702.0 478.4 L702.5 478.9 L703.0 479.9 L703.2 480.4 L703.5 480.7 L704.0 481.3 L704.5 481.6 L705.0 482.7 L705.5 484.6 L706.0 484.0 L706.4 485.2 L706.5 485.9 L707.0 492.6 L707.5 493.9 L708.0 496.3 L708.5 498.6 L708.8 500.2 L709.0 500.7 L709.5 502.5 L710.0 503.4 L710.5 504.4 L711.0 504.0 L711.5 505.1 L712.0 507.1 L712.5 506.1 L713.0 504.1 L713.5 502.9 L714.0 500.7 L714.4 500.2 L714.5 501.7 L715.0 504.9 L715.5 508.3 L716.0 511.8 L716.5 514.0 L716.8 515.8 L717.0 516.2 L717.5 517.8 L718.0 519.1 L718.5 520.5 L719.0 521.2 L719.2 521.4 L719.5 522.4 L720.0 523.1 L720.5 524.5 L721.0 525.0 L721.5 527.4 L722.0 527.8 L722.4 529.9 L722.5 529.0 L723.0 526.1 L723.5 523.5 L724.0 521.3 L724.5 519.6 L724.8 518.3 L725.0 517.8 L725.5 518.7 L726.0 520.4 L726.5 521.5 L727.0 522.2 L727.5 523.0 L728.0 524.6 L728.5 525.0 L729.0 526.7 L729.5 528.3 L730.0 530.5 L730.4 531.0 L730.5 531.9 L731.0 533.5 L731.5 535.3 L732.0 537.6 L732.5 541.0 L733.0 542.8 L733.5 544.4 L733.6 544.4 L734.0 543.9 L734.5 542.5 L735.0 540.4 L735.5 538.5 L736.0 537.5 L736.5 538.6 L737.0 538.3 L737.5 538.7 L738.0 539.9 L738.5 540.8 L739.0 542.0 L739.2 541.5 L739.5 541.5 L740.0 539.7 L740.5 537.7 L741.0 535.5 L741.5 535.1 L741.6 533.7 L742.0 532.8 L742.5 529.6 L743.0 527.4 L743.5 526.1 L744.0 523.1 L744.5 522.0 L745.0 519.0 L745.5 516.3 L745.6 516.0 L746.0 518.9 L746.5 522.5 L747.0 526.2 L747.5 528.2 L748.0 531.8 L748.5 534.8 L748.8 538.0 L749.0 535.7 L749.5 533.2 L750.0 530.9 L750.5 529.1 L751.0 527.6 L751.2 526.6 L751.5 526.2 L752.0 526.4 L752.5 526.0 L753.0 524.8 L753.5 524.3 L754.0 525.3 L754.4 524.8 L754.5 523.5 L755.0 523.8 L755.5 522.6 L756.0 521.8 L756.5 521.0 L757.0 520.0 L757.5 519.0 L757.6 519.2 L758.0 517.0 L758.5 514.9 L759.0 510.6 L759.2 510.7 L759.5 510.9 L760.0 513.5 L760.5 516.6 L761.0 518.9 L761.5 520.6 L761.6 520.5 L762.0 519.3 L762.5 516.8 L763.0 515.3 L763.5 511.8 L764.0 509.8 L764.5 513.6 L765.0 515.2 L765.5 518.9 L766.0 522.5 L766.5 525.4 L767.0 527.3 L767.2 528.5 L767.5 529.0 L768.0 531.1 L768.5 530.8 L769.0 532.3 L769.5 533.3 L770.0 533.1 L770.4 533.6 L770.5 534.8 L771.0 534.5 L771.5 534.2 L772.0 535.1 L772.5 534.8 L773.0 534.9 L773.5 534.8 L773.6 536.0 L774.0 537.5 L774.5 538.5 L775.0 540.5 L775.5 540.5 L776.0 542.4 L776.5 544.3 L776.8 545.9 L777.0 546.3 L777.5 546.4 L778.0 547.2 L778.5 548.5 L779.0 549.6 L779.5 551.3 L780.0 551.1 L780.5 552.3 L781.0 552.5 L781.5 552.9 L782.0 553.0 L782.5 553.0 L783.0 552.8 L783.2 552.9 L783.5 553.4 L784.0 554.9 L784.5 554.5 L785.0 555.4 L785.5 557.1 L786.0 557.0 L786.4 557.3 L786.5 556.7 L787.0 554.8 L787.5 551.7 L788.0 550.0 L788.5 547.1 L789.0 544.5 L789.5 540.6 L789.6 539.7 L790.0 537.4 L790.5 535.0 L791.0 532.3 L791.5 528.9 L792.0 525.6 L792.5 522.9 L793.0 520.2 L793.5 517.3 L793.6 516.8 L794.0 518.8 L794.5 520.9 L795.0 522.3 L795.5 525.8 L796.0 527.3 L796.5 530.5 L797.0 532.9 L797.5 536.2 L798.0 538.1 L798.5 540.9 L799.0 543.7 L799.2 544.6 L799.5 547.0 L800.0 548.5 L800.5 550.1 L801.0 552.2 L801.5 555.2 L801.6 554.8 L802.0 552.5 L802.5 551.1 L803.0 548.5 L803.5 546.7 L804.0 543.0 L804.5 541.9 L805.0 540.8 L805.5 539.1 L806.0 537.6 L806.4 534.9 L806.5 535.7 L807.0 537.7 L807.5 540.1 L808.0 543.6 L808.5 545.2 L809.0 548.0 L809.5 549.3 L809.6 550.6 L810.0 552.6 L810.5 555.6 L811.0 559.8 L811.5 563.4 L812.0 565.4 L812.5 568.2 L813.0 570.2 L813.5 571.5 L813.6 572.2 L814.0 568.6 L814.5 564.7 L815.0 560.8 L815.2 559.8 L815.5 557.4 L816.0 552.7 L816.5 548.4 L817.0 544.9 L817.5 541.5 L817.6 539.9 L818.0 524.1 L818.4 507.9 L818.5 507.1 L819.0 497.7 L819.5 485.8 L820.0 481.4 L820.5 478.5 L821.0 475.4 L821.5 472.2 L822.0 468.0 L822.4 465.5 L822.5 467.0 L823.0 469.9 L823.5 473.0 L824.0 476.4 L824.5 480.7 L824.8 481.7 L825.0 480.3 L825.5 475.5 L826.0 471.1 L826.5 467.3 L827.0 463.0 L827.5 457.5 L828.0 452.7 L828.5 454.9 L829.0 455.4 L829.5 456.4 L830.0 459.2 L830.4 459.5 L830.5 460.4 L831.0 461.0 L831.5 463.1 L832.0 463.8 L832.5 464.7 L832.8 465.2 L833.0 464.2 L833.5 459.7 L834.0 455.5 L834.5 449.5 L835.0 445.7 L835.2 443.4 L835.5 444.8 L836.0 446.2 L836.5 448.5 L837.0 450.8 L837.5 453.5 L837.6 452.6 L838.0 454.8 L838.5 457.3 L839.0 459.5 L839.5 460.3 L840.0 462.2 L840.5 463.9 L841.0 464.4 L841.5 464.0 L842.0 463.7 L842.5 465.5 L843.0 465.0 L843.5 466.2 L844.0 466.2 L844.5 466.8 L845.0 466.0 L845.5 467.2 L846.0 466.6 L846.5 467.1 L847.0 468.1 L847.2 468.1 L847.5 468.7 L847.6 469.3 L848.0 471.7 L848.5 474.6 L849.0 477.0 L849.2 477.7 L849.5 479.5 L849.6 480.8 L850.0 484.6 L850.4 486.9 L850.5 495.0 L850.8 493.3 L851.0 490.9 L851.2 490.8 L851.5 487.7 L852.0 487.8 L852.5 483.2 L852.8 480.6 L853.0 480.2 L853.2 480.5 L853.5 480.9 L854.0 480.9 L854.5 481.5 L855.0 481.4 L855.5 481.7 L855.6 481.0 L856.0 482.2 L856.5 489.4 L857.0 493.0 L857.2 495.4 L857.5 493.8 L858.0 490.7 L858.5 487.6 L859.0 485.4 L859.5 482.1 L859.6 481.6 L860.0 484.0 L860.5 485.7 L861.0 488.6 L861.5 491.1 L862.0 492.7 L862.5 492.0 L863.0 489.4 L863.5 488.8 L864.0 487.2 L864.4 485.4 L864.5 485.3 L865.0 489.0 L865.5 491.8 L866.0 495.7 L866.5 497.4 L866.8 500.4 L867.0 502.1 L867.5 505.3 L868.0 509.1 L868.5 511.8 L869.0 516.7 L869.2 517.4 L869.5 516.3 L870.0 513.3 L870.5 509.1 L871.0 507.1 L871.5 504.3 L872.0 499.9 L872.4 498.0 L872.5 499.1 L873.0 500.9 L873.5 504.7 L874.0 506.4 L874.5 509.9 L874.8 510.4 L875.0 510.5 L875.5 509.8 L876.0 507.3 L876.5 506.1 L877.0 505.1 L877.2 504.3 L877.5 504.5 L878.0 505.7 L878.5 506.7 L879.0 508.9 L879.5 509.5 L880.0 510.8 L880.4 510.5 L880.5 511.6 L881.0 511.0 L881.5 512.1 L882.0 512.8 L882.5 512.9 L883.0 514.2 L883.5 514.2 L883.6 514.3 L884.0 514.8 L884.5 513.6 L885.0 515.0 L885.5 514.4 L886.0 514.0 L886.5 510.7 L887.0 505.8 L887.5 503.0 L888.0 498.3 L888.4 494.8 L888.5 494.4 L889.0 488.9 L889.5 483.5 L890.0 479.4 L890.2 477.4 L890.5 477.8 L891.0 475.3 L891.5 468.7 L892.0 468.1 L892.4 466.6 L892.5 466.5 L893.0 464.8 L893.5 463.2 L893.5 463.2 L894.0 465.2 L894.5 467.9 L895.0 470.5 L895.4 472.8 L895.5 474.2 L896.0 467.8 L896.4 466.2 L896.5 466.4 L897.0 463.2 L897.5 460.9 L898.0 459.2 L898.3 457.4 L898.5 458.7 L899.0 460.7 L899.5 463.4 L900.0 465.6 L900.4 466.7 L900.5 467.8 L901.0 468.5 L901.5 473.8 L902.0 478.1 L902.5 480.0 L902.7 481.0 L902.8 481.6 L903.0 480.7 L903.5 468.0 L904.0 465.0 L904.5 461.6 L904.9 459.2 L905.0 458.6 L905.2 459.2 L905.5 458.6 L906.0 457.4 L906.5 457.1 L906.8 456.3 L907.0 456.7 L907.1 456.3 L907.5 457.0 L908.0 459.9 L908.5 460.3 L909.0 462.9 L909.3 463.8 L909.5 464.6 L910.0 466.8 L910.5 470.5 L910.8 470.4 L911.0 469.7 L911.5 467.2 L912.0 462.7 L912.4 460.3 L912.5 460.3 L912.9 457.4 L913.0 457.8 L913.5 459.9 L914.0 460.7 L914.5 462.7 L915.0 464.6 L915.1 464.7 L915.5 466.9 L916.0 468.0 L916.5 469.1 L917.0 469.3 L917.5 471.8 L918.0 472.9 L918.1 472.6 L918.5 469.2 L919.0 464.2 L919.5 459.4 L920.0 454.7 L920.3 452.5 L920.4 452.5 L920.5 453.2 L921.0 455.1 L921.5 456.1 L922.0 457.5 L922.5 458.4 L922.5 457.6 L922.8 457.5 L923.0 456.9 L923.5 456.4 L924.0 455.0 L924.5 453.6 L925.0 453.2 L925.4 452.9 L925.5 451.2 L926.0 449.9 L926.5 446.2 L927.0 444.2 L927.5 441.8 L928.0 440.2 L928.3 439.0 L928.5 438.4 L929.0 437.0 L929.2 437.6 L929.5 436.3 L929.8 435.7 L930.0 437.2 L930.5 437.8 L931.0 438.9 L931.5 439.8 L931.6 440.5 L932.0 440.5 L932.0 441.2 L932.5 444.0 L933.0 447.2 L933.2 447.7 L933.4 449.6 L933.5 449.6 L934.0 450.8 L934.5 452.4 L935.0 454.7 L935.5 455.5 L935.6 457.1 L935.6 456.0 L936.0 452.9 L936.5 449.1 L937.0 446.4 L937.5 441.5 L937.8 438.5 L938.0 437.7 L938.5 435.9 L939.0 435.1 L939.5 433.1 L940.0 432.6 L940.0 432.6 L940.4 430.3 L940.5 431.4 L941.0 432.4 L941.5 434.4 L942.0 435.8 L942.2 436.5 L942.5 435.9 L942.8 438.0 L943.0 436.7 L943.5 433.2 L944.0 428.4 L944.4 425.6 L944.5 424.9 L945.0 421.3 L945.5 419.1 L946.0 415.5 L946.5 414.5 L947.0 414.2 L947.5 413.2 L948.0 412.0 L948.4 411.2 L948.5 410.3 L949.0 407.0 L949.5 401.8 L950.0 397.6 L950.5 393.5 L950.8 390.2 L951.0 389.1 L951.5 385.5 L952.0 382.5 L952.5 378.3 L953.0 374.6 L953.2 374.1 L953.5 373.4 L954.0 374.0 L954.5 373.6 L955.0 372.6 L955.5 373.3 L955.6 373.3 L956.0 380.2 L956.5 387.6 L957.0 396.1 L957.2 399.1 L957.5 396.9 L958.0 395.3 L958.5 391.4 L959.0 389.9 L959.5 386.2 L959.6 385.4 L960.0 380.9 L960.5 375.8 L961.0 370.2 L961.2 366.2 L961.5 366.6 L962.0 365.9 L962.5 365.7 L963.0 364.1 L963.5 363.9 L963.6 363.6 L964.0 355.5 L964.4 345.8 L964.5 347.4 L965.0 348.9 L965.5 351.2 L966.0 354.5 L966.5 362.2 L967.0 369.6 L967.5 378.4 L967.6 379.1 L968.0 373.5 L968.5 364.8 L969.0 356.5 L969.2 352.8 L969.5 355.0 L970.0 359.4 L970.5 363.7 L971.0 368.8 L971.5 371.9 L971.6 374.0 L972.0 369.2 L972.5 365.1 L973.0 360.9 L973.5 357.6 L974.0 352.6 L974.5 355.4 L975.0 359.2 L975.5 361.2 L975.6 362.1 L976.0 363.3 L976.5 365.0 L977.0 366.3 L977.5 367.5 L978.0 368.4 L978.5 369.7 L979.0 370.7 L979.5 373.1 L980.0 374.2 L980.4 375.4 L980.5 375.9 L981.0 383.3 L981.5 390.8 L982.0 397.5 L982.5 408.8 L982.8 416.5 L983.0 416.0 L983.5 412.0 L984.0 408.9 L984.5 406.1 L985.0 403.7 L985.2 402.7 L985.5 403.1 L986.0 405.6 L986.5 408.3 L986.8 409.9 L987.0 410.9 L987.5 412.0 L988.0 413.9 L988.5 415.4 L989.0 418.3 L989.2 418.6 L989.5 419.4 L990.0 423.7 L990.5 425.4 L990.8 427.6 L991.0 430.0 L991.5 433.4 L992.0 437.0 L992.5 440.2 L993.0 443.4 L993.2 445.6 L993.5 443.6 L994.0 441.7 L994.5 440.0 L995.0 437.5 L995.5 436.0 L995.6 436.3 L996.0 438.5 L996.5 441.2 L997.0 444.4 L997.2 445.3 L997.5 446.6 L998.0 450.4 L998.5 472.6 L999.0 473.8 L999.5 474.7 L999.6 474.1 L1000.0 472.2 L1000.5 469.8 L1001.0 449.1 L1001.5 444.5 L1002.0 441.0 L1002.5 445.2 L1003.0 449.0 L1003.5 452.9 L1004.0 467.3 L1004.4 468.1 L1004.5 468.3 L1005.0 469.3 L1005.5 470.4 L1006.0 472.3 L1006.5 472.8 L1006.8 474.1 L1007.0 476.3 L1007.5 480.1 L1008.0 484.0 L1008.5 487.4 L1009.0 491.7 L1009.2 493.3 L1009.5 492.2 L1010.0 489.5 L1010.5 487.6 L1011.0 485.7 L1011.5 482.2 L1011.6 482.4 L1012.0 480.8 L1012.5 477.8 L1013.0 475.7 L1013.5 474.1 L1014.0 470.3 L1014.5 472.1 L1015.0 472.5 L1015.5 474.5 L1016.0 475.7 L1016.5 476.0 L1017.0 476.4 L1017.2 477.5 L1017.5 477.9 L1018.0 478.9 L1018.5 479.4 L1019.0 480.3 L1019.5 481.4 L1020.0 481.6 L1020.4 482.1 L1020.5 483.5 L1021.0 484.9 L1021.5 488.4 L1022.0 490.6 L1022.5 493.8 L1022.8 494.4 L1023.0 497.4 L1023.5 500.4 L1024.0 503.9 L1024.5 508.2 L1025.0 512.4 L1025.2 513.4 L1025.5 511.7 L1026.0 507.7 L1026.5 504.1 L1027.0 499.6 L1027.5 495.4 L1027.6 494.6 L1028.0 496.7 L1028.5 498.7 L1029.0 499.7 L1029.5 500.9 L1030.0 503.5 L1030.5 499.5 L1031.0 495.9 L1031.5 492.4 L1032.0 490.1 L1032.4 487.5 L1032.5 486.3 L1033.0 481.4 L1033.5 476.8 L1034.0 471.6 L1034.5 468.1 L1034.8 464.4 L1035.0 466.4 L1035.5 470.7 L1036.0 474.7 L1036.5 478.1 L1037.0 481.9 L1037.2 483.9 L1037.5 479.8 L1038.0 475.3 L1038.5 468.8 L1039.0 464.0 L1039.5 457.4 L1039.6 456.4 L1040.0 458.6 L1040.4 451.7 L1040.5 451.7 L1041.0 453.4 L1041.5 468.4 L1042.0 470.6 L1042.5 473.6 L1042.8 475.5 L1043.0 474.7 L1043.5 472.0 L1044.0 469.6 L1044.5 467.0 L1045.0 463.8 L1045.2 463.7 L1045.5 465.0 L1046.0 466.0 L1046.5 469.6 L1047.0 472.0 L1047.5 474.2 L1047.6 473.6 L1048.0 478.2 L1048.5 482.2 L1049.0 485.6 L1049.5 489.9 L1050.0 495.7 L1050.5 493.2 L1051.0 490.6 L1051.5 488.4 L1052.0 486.4 L1052.4 485.0 L1052.5 485.8 L1053.0 485.2 L1053.5 484.8 L1054.0 486.0 L1054.5 485.9 L1055.0 484.9 L1055.5 486.0 L1055.6 485.6 L1056.0 488.7 L1056.5 492.0 L1057.0 495.8 L1057.5 499.2 L1057.6 499.9 L1058.0 501.7 L1058.5 506.0 L1058.8 507.8 L1059.0 507.3 L1059.2 505.8 L1059.5 505.1 L1060.0 502.3 L1060.5 499.5 L1061.0 497.1 L1061.2 496.0 L1061.5 498.1 L1061.6 497.9 L1062.0 500.5 L1062.5 502.5 L1063.0 505.6 L1063.2 506.6 L1063.5 508.2 L1064.0 511.2 L1064.4 511.8 L1064.5 512.9 L1065.0 511.3 L1065.5 510.5 L1065.6 510.5 L1066.0 509.9 L1066.5 497.9 L1067.0 496.5 L1067.2 496.7 L1067.5 496.9 L1068.0 500.5 L1068.5 503.2 L1069.0 504.8 L1069.5 508.4 L1069.6 509.1 L1070.0 508.2 L1070.4 505.9 L1070.5 506.6 L1071.0 504.2 L1071.5 502.4 L1072.0 501.4 L1072.5 504.4 L1072.8 508.1 L1073.0 509.7 L1073.5 513.5 L1074.0 521.4 L1074.4 522.5 L1074.5 523.1 L1075.0 525.5 L1075.2 526.8 L1075.5 524.5 L1076.0 517.2 L1076.5 515.9 L1076.8 515.3 L1077.0 516.3 L1077.5 517.0 L1077.6 518.1 L1078.0 516.6 L1078.5 518.8 L1079.0 520.4 L1079.5 522.8 L1080.0 525.6 L1080.5 530.5 L1081.0 536.3 L1081.5 541.0 L1081.6 542.1 L1082.0 540.7 L1082.5 539.5 L1083.0 537.9 L1083.5 536.5 L1084.0 533.7 L1084.5 535.4 L1085.0 536.4 L1085.5 536.5 L1086.0 536.3 L1086.4 537.3 L1086.5 535.4 L1087.0 528.7 L1087.5 522.9 L1088.0 515.4 L1088.5 508.5 L1088.8 490.1 L1089.0 486.5 L1089.5 476.5 L1090.0 467.0 L1090.4 459.4 L1090.5 458.7 L1091.0 454.6 L1091.5 450.7 L1092.0 445.9 L1092.5 446.3 L1093.0 445.7 L1093.5 445.8 L1094.0 444.4 L1094.4 444.3 L1094.5 442.7 L1095.0 437.2 L1095.5 430.8 L1096.0 423.7 L1096.5 416.6 L1096.8 413.3 L1097.0 416.3 L1097.5 423.4 L1098.0 430.4 L1098.4 436.5 L1098.5 439.0 L1099.0 450.2 L1099.5 461.8 L1099.5 462.6 L1100.0 462.7 L1100.5 460.9 L1101.0 461.4 L1101.5 460.1 L1101.6 460.2 L1102.0 465.0 L1102.5 469.3 L1103.0 474.5 L1103.5 478.4 L1104.0 482.4 L1104.5 487.0 L1105.0 491.3 L1105.5 495.9 L1106.0 500.0 L1106.4 502.4 L1106.5 502.4 L1107.0 502.6 L1107.2 503.7 L1107.5 503.4 L1108.0 504.0 L1108.5 504.4 L1108.8 504.8 L1109.0 504.6 L1109.5 500.3 L1110.0 498.3 L1110.4 494.3 L1110.5 494.9 L1111.0 490.3 L1111.2 488.8 L1111.5 489.2 L1112.0 487.1 L1112.5 486.5 L1112.8 484.8 L1113.0 484.1 L1113.5 483.9 L1113.6 483.5 L1114.0 485.9 L1114.5 488.4 L1115.0 490.0 L1115.2 491.9 L1115.5 493.7 L1116.0 495.9 L1116.5 489.0 L1117.0 480.3 L1117.5 473.7 L1117.6 471.8 L1118.0 464.6 L1118.4 458.4 L1118.5 460.5 L1119.0 466.3 L1119.5 470.6 L1120.0 476.5 L1120.5 482.7 L1121.0 487.3 L1121.5 493.9 L1121.6 494.4 L1122.0 490.5 L1122.5 487.0 L1123.0 483.3 L1123.2 481.5 L1123.5 485.7 L1124.0 491.2 L1124.5 498.5 L1125.0 504.2 L1125.5 511.0 L1125.6 512.2 L1126.0 510.3 L1126.4 508.6 L1126.5 508.9 L1127.0 507.1 L1127.5 504.9 L1128.0 502.5 L1128.5 505.4 L1128.8 507.0 L1129.0 509.8 L1129.5 512.7 L1130.0 516.3 L1130.4 515.5 L1130.5 516.2 L1131.0 518.5 L1131.2 518.9 L1131.5 520.4 L1132.0 522.9 L1132.5 526.1 L1132.8 528.6 L1133.0 529.0 L1133.5 532.5 L1134.0 535.4 L1134.4 538.2 L1134.5 537.6 L1135.0 534.1 L1135.5 530.9 L1136.0 528.7 L1136.5 517.6 L1136.8 516.5 L1137.0 516.0 L1137.5 513.9 L1138.0 510.3 L1138.5 509.3 L1139.0 507.0 L1139.2 506.2 L1139.5 505.7 L1140.0 505.2 L1140.5 506.2 L1141.0 506.1 L1141.5 505.9 L1142.0 506.3 L1142.4 505.4 L1142.5 504.7 L1143.0 504.5 L1143.5 503.9 L1144.0 501.9 L1144.5 501.8 L1144.8 501.5 L1145.0 501.6 L1145.5 505.2 L1145.6 505.9 L1146.0 507.9 L1146.5 510.5 L1147.0 513.6 L1147.2 515.6 L1147.5 514.9 L1148.0 513.0 L1148.5 511.1 L1149.0 510.9 L1149.5 509.5 L1149.6 508.4 L1150.0 505.7 L1150.4 503.0 L1150.5 502.2 L1151.0 497.6 L1151.5 493.6 L1152.0 489.7 L1152.5 491.1 L1152.8 492.3 L1153.0 493.1 L1153.5 495.9 L1154.0 497.4 L1154.4 499.3 L1154.5 499.7 L1155.0 503.2 L1155.5 506.0 L1156.0 509.1 L1156.5 514.0 L1156.8 515.0 L1157.0 514.2 L1157.5 514.0 L1157.6 514.1 L1158.0 512.2 L1158.5 512.0 L1159.0 510.6 L1159.5 509.8 L1160.0 508.0 L1160.5 511.4 L1160.8 514.9 L1161.0 516.1 L1161.5 512.6 L1162.0 515.5 L1162.4 517.2 L1162.5 518.6 L1163.0 520.8 L1163.5 524.4 L1164.0 526.8 L1164.5 525.9 L1164.8 525.5 L1165.0 524.0 L1165.5 517.0 L1166.0 516.7 L1166.5 516.2 L1167.0 515.5 L1167.2 515.3 L1167.5 515.8 L1168.0 515.8 L1168.5 513.9 L1169.0 513.4 L1169.5 512.1 L1170.0 509.5 L1170.5 509.1 L1171.0 507.5 L1171.2 506.6 L1171.5 509.7 L1172.0 511.6 L1172.5 515.1 L1173.0 516.6 L1173.5 520.1 L1173.6 520.3 L1174.0 522.2 L1174.4 524.7 L1174.5 523.9 L1175.0 516.7 L1175.5 514.8 L1176.0 511.6 L1176.5 512.3 L1177.0 513.6 L1177.5 514.8 L1177.6 515.8 L1178.0 516.6 L1178.4 517.3 L1178.5 516.0 L1179.0 516.9 L1179.5 516.4 L1180.0 516.0 L1180.5 516.2 L1180.8 514.5 L1181.0 515.1 L1181.5 517.4 L1182.0 523.9 L1182.5 523.5 L1183.0 522.9 L1183.5 523.3 L1184.0 523.6 L1184.5 520.8 L1185.0 519.4 L1185.5 517.6 L1186.0 516.6 L1186.5 515.7 L1187.0 513.7 L1187.2 513.2 L1187.5 512.0 L1188.0 511.1 L1188.5 508.3 L1189.0 507.6 L1189.5 505.1 L1190.0 503.1 L1190.4 503.1 L1190.5 501.6 L1191.0 500.7 L1191.5 498.6 L1192.0 496.6 L1192.5 493.4 L1192.8 492.7 L1193.0 490.6 L1193.5 487.9 L1194.0 483.7 L1194.5 479.4 L1195.0 475.1 L1195.2 473.3 L1195.4 472.3 L1195.5 470.4 L1196.0 465.3 L1196.5 460.2 L1196.8 457.0 L1197.0 455.2 L1197.5 451.6 L1197.6 450.4 L1198.0 446.0 L1198.2 445.8 L1198.3 443.4 L1198.5 442.3 L1199.0 438.6 L1199.5 435.4 L1199.8 434.6 L1200.0 433.3 L1200.5 432.0 L1201.0 431.5 L1201.2 430.9 L1201.5 431.2 L1201.7 429.5 L1201.9 431.8 L1202.0 430.7 L1202.5 434.3 L1203.0 436.2 L1203.2 436.3 L1203.5 438.1 L1203.7 438.6 L1204.0 442.2 L1204.5 447.6 L1204.6 449.4 L1205.0 447.3 L1205.5 443.0 L1206.0 438.5 L1206.1 436.4 L1206.2 436.3 L1206.4 436.6 L1206.5 434.9 L1207.0 434.3 L1207.5 432.0 L1207.6 432.9 L1208.0 433.0 L1208.5 436.3 L1209.0 437.6 L1209.0 437.4 L1209.2 436.6 L1209.5 437.2 L1209.6 436.5 L1210.0 434.9 L1210.5 434.0 L1211.0 436.5 L1211.5 437.1 L1212.0 439.4 L1212.2 439.6 L1212.5 440.4 L1212.5 441.5 L1212.8 442.4 L1213.0 442.3 L1213.5 443.9 L1214.0 445.6 L1214.4 447.9 L1214.5 447.7 L1215.0 447.6 L1215.3 447.7 L1215.5 448.4 L1216.0 448.8 L1216.3 449.2 L1216.5 449.6 L1217.0 451.8 L1217.5 454.3 L1218.0 458.1 L1218.3 459.1 L1218.3 459.7 L1218.5 459.1 L1219.0 461.3 L1219.2 460.9 L1219.5 462.4 L1219.8 462.9 L1220.0 460.6 L1220.5 456.2 L1221.0 454.0 L1221.2 451.6 L1221.3 451.7 L1221.5 449.1 L1222.0 445.0 L1222.4 442.8 L1222.5 441.2 L1223.0 436.9 L1223.2 435.8 L1223.5 436.0 L1224.0 434.8 L1224.5 435.4 L1225.0 435.0 L1225.1 435.0 L1225.3 434.1 L1225.5 434.8 L1225.6 434.8 L1226.0 434.3 L1226.5 432.7 L1227.0 432.6 L1227.1 431.9 L1227.5 427.5 L1228.0 420.4 L1228.3 417.5 L1228.5 415.9 L1228.5 414.5 L1229.0 413.0 L1229.5 411.2 L1230.0 409.5 L1230.4 407.4 L1230.4 408.8 L1230.5 407.3 L1231.0 409.5 L1231.5 411.7 L1232.0 414.1 L1232.0 415.1 L1232.4 415.1 L1232.5 415.6 L1232.8 417.6 L1233.0 417.5 L1233.4 418.6 L1233.5 419.6 L1234.0 419.8 L1234.5 420.0 L1235.0 420.5 L1235.2 419.6 L1235.4 421.0 L1235.4 420.7 L1235.5 419.7 L1236.0 420.2 L1236.5 421.1 L1236.8 421.4 L1237.0 421.5 L1237.5 422.7 L1237.6 423.5 L1238.0 424.2 L1238.4 426.2 L1238.5 426.9 L1238.8 426.6 L1239.0 428.0 L1239.5 429.9 L1240.0 430.7 L1240.3 432.6 L1240.4 433.6 L1240.5 433.0 L1241.0 435.4 L1241.5 438.4 L1241.7 439.0 L1242.0 442.4 L1242.4 448.6 L1242.5 449.7 L1243.0 455.6 L1243.2 458.0 L1243.5 455.9 L1243.5 455.7 L1244.0 452.2 L1244.5 447.6 L1244.7 446.4 L1244.8 446.0 L1245.0 445.8 L1245.5 443.8 L1246.0 443.8 L1246.5 443.8 L1246.5 443.7 L1246.6 442.4 L1247.0 442.7 L1247.5 443.0 L1248.0 442.6 L1248.5 442.9 L1248.6 442.1 L1249.0 444.7 L1249.5 447.0 L1249.5 446.3 L1250.0 448.7 L1250.5 452.3 L1250.5 452.0 L1251.0 456.2 L1251.2 457.3 L1251.5 459.9 L1251.5 459.8 L1252.0 448.8 L1252.5 436.4 L1253.0 427.5 L1253.0 426.8 L1253.5 426.8 L1253.6 426.0 L1254.0 425.9 L1254.4 425.9 L1254.5 425.3 L1255.0 424.0 L1255.5 423.7 L1255.5 423.5 L1256.0 423.6 L1256.4 422.0 L1256.5 422.0 L1256.8 422.3 L1257.0 421.4 L1257.5 421.9 L1258.0 422.2 L1258.3 421.4 L1258.5 419.7 L1258.5 419.8 L1259.0 416.6 L1259.2 414.6 L1259.3 413.9 L1259.5 414.3 L1260.0 415.6 L1260.5 416.8 L1260.8 417.1 L1261.0 417.0 L1261.5 416.8 L1261.6 417.5 L1261.6 418.0 L1262.0 417.6 L1262.5 417.6 L1262.7 417.7 L1263.0 417.7 L1263.5 419.9 L1264.0 420.8 L1264.2 421.4 L1264.5 422.2 L1264.6 422.1 L1265.0 422.7 L1265.5 423.6 L1265.6 423.8 L1266.0 425.0 L1266.5 425.8 L1267.0 427.1 L1267.1 426.4 L1267.2 426.0 L1267.5 423.8 L1267.6 421.8 L1268.0 418.3 L1268.1 417.4 L1268.5 412.9 L1268.8 411.0 L1269.0 407.9 L1269.1 408.1 L1269.5 406.0 L1270.0 401.8 L1270.5 400.8 L1270.5 400.0 L1270.6 398.9 L1271.0 399.2 L1271.5 398.9 L1272.0 399.1 L1272.0 398.1 L1272.5 397.9 L1273.0 398.8 L1273.5 398.1 L1273.6 397.1 L1273.9 396.8 L1274.0 396.7 L1274.5 396.2 L1275.0 395.1 L1275.5 394.5 L1276.0 393.4 L1276.5 391.9 L1276.7 392.0 L1277.0 391.3 L1277.5 390.2 L1277.8 389.1 L1278.0 389.2 L1278.5 388.1 L1279.0 387.4 L1279.1 385.9 L1279.5 389.6 L1279.8 389.8 L1280.0 392.3 L1280.5 394.9 L1281.0 406.8 L1281.3 408.4 L1281.5 408.3 L1281.7 408.4 L1282.0 409.6 L1282.5 410.8 L1282.7 399.1 L1283.0 398.0 L1283.5 396.8 L1284.0 395.4 L1284.5 394.5 L1284.7 393.3 L1285.0 393.4 L1285.5 393.7 L1286.0 393.4 L1286.5 393.3 L1286.7 394.0 L1287.0 395.0 L1287.5 395.9 L1288.0 397.3 L1288.5 398.4 L1288.6 414.2 L1288.7 414.5 L1289.0 416.1 L1289.5 417.7 L1290.0 418.6 L1290.0 420.1 L1290.5 424.0 L1290.8 427.6 L1291.0 430.2 L1291.5 435.7 L1292.0 435.3 L1292.5 436.4 L1293.0 437.9 L1293.5 437.2 L1293.5 437.2 L1293.8 438.0 L1294.0 437.9 L1294.5 438.6 L1294.9 438.4 L1295.0 437.9 L1295.5 438.0 L1296.0 436.5 L1296.4 436.0 L1296.5 437.0 L1296.8 438.3 L1297.0 439.5 L1297.5 442.8 L1297.8 444.6 L1298.0 446.4 L1298.5 449.0 L1299.0 451.7 L1299.3 452.9 L1299.5 453.3 L1299.8 453.1 L1300.0 453.3 L1300.5 453.1 L1301.0 453.3 L1301.3 453.3 L1301.5 452.1 L1301.8 451.4 L1302.0 451.3 L1302.5 450.9 L1302.7 449.4 L1303.0 446.8 L1303.5 441.9 L1304.0 435.5 L1304.2 433.8 L1304.5 434.5 L1304.8 433.9 L1305.0 433.3 L1305.2 432.5 L1305.5 435.2 L1306.0 437.3 L1306.5 439.8 L1306.6 440.7 L1307.0 442.2 L1307.5 443.8 L1307.9 445.1 L1308.0 445.9 L1308.1 446.7 L1308.5 448.4 L1309.0 449.8 L1309.1 450.1" fill="none" stroke="#1C365E" stroke-width="5" stroke-linejoin="round" stroke-linecap="round"/>
<path d="M440.9 494.0 L441.0 494.1 L441.5 494.8 L442.0 494.1 L442.5 494.2 L443.0 494.4 L443.5 493.8 L444.0 494.3 L444.5 494.6 L445.0 494.9 L445.5 493.8 L446.0 494.2 L446.5 493.9 L447.0 495.1 L447.5 494.9 L447.7 493.9 L448.0 495.5 L448.5 495.5 L449.0 495.1 L449.5 495.2 L450.0 494.5 L450.5 494.4 L451.0 495.3 L451.5 494.7 L452.0 495.0 L452.5 495.2 L452.6 494.9 L453.0 498.1 L453.5 501.0 L453.6 502.0 L454.0 502.2 L454.5 503.1 L455.0 503.6 L455.5 504.6 L456.0 504.8 L456.5 505.0 L457.0 506.7 L457.5 507.1 L457.5 507.0 L458.0 507.6 L458.5 507.8 L459.0 508.5 L459.5 509.4 L460.0 509.9 L460.4 511.6 L460.5 511.2 L461.0 512.6 L461.5 512.5 L462.0 514.1 L462.5 514.6 L463.0 513.9 L463.3 514.6 L463.5 516.0 L464.0 515.8 L464.5 517.1 L465.0 516.6 L465.5 516.6 L466.0 518.0 L466.2 518.5 L466.5 517.6 L467.0 517.1 L467.5 517.3 L468.0 518.2 L468.5 517.7 L469.0 516.5 L469.2 516.7 L469.5 516.1 L470.0 515.5 L470.5 516.2 L471.0 514.7 L471.5 514.8 L472.0 514.1 L472.1 513.6 L472.5 514.4 L473.0 513.2 L473.5 513.9 L474.0 512.9 L474.5 513.2 L475.0 512.7 L475.0 512.8 L475.5 514.4 L476.0 514.6 L476.5 514.3 L477.0 515.7 L477.0 515.0 L477.5 519.3 L477.9 523.4 L478.0 524.4 L478.5 533.6 L478.5 535.4 L479.0 540.2 L479.3 544.0 L479.5 544.3 L480.0 542.3 L480.5 541.0 L480.9 539.8 L481.0 540.4 L481.5 543.2 L482.0 544.6 L482.5 547.2 L482.8 548.1 L483.0 550.8 L483.5 558.5 L484.0 564.6 L484.4 569.8 L484.5 568.8 L485.0 562.0 L485.5 556.3 L485.7 554.8 L486.0 556.1 L486.5 558.1 L487.0 560.8 L487.1 562.3 L487.5 559.6 L488.0 554.7 L488.5 552.2 L488.7 550.8 L489.0 551.4 L489.5 552.6 L490.0 553.6 L490.5 555.0 L490.6 556.8 L491.0 552.2 L491.5 548.4 L492.0 543.2 L492.5 539.6 L492.6 538.7 L493.0 536.6 L493.5 534.6 L493.9 534.0 L494.0 533.6 L494.5 538.6 L495.0 543.8 L495.5 548.8 L495.5 548.5 L496.0 549.4 L496.5 552.0 L497.0 552.3 L497.4 553.3 L497.5 554.2 L498.0 558.0 L498.5 560.8 L499.0 564.5 L499.4 567.6 L499.5 567.3 L500.0 564.1 L500.5 562.0 L501.0 560.3 L501.3 558.8 L501.5 558.1 L502.0 557.7 L502.5 557.0 L503.0 555.8 L503.3 555.3 L503.5 555.1 L504.0 556.0 L504.5 555.2 L505.0 555.1 L505.2 553.4 L505.5 554.9 L506.0 555.6 L506.5 557.0 L507.0 557.3 L507.2 558.8 L507.5 558.3 L508.0 560.5 L508.5 562.3 L509.0 564.1 L509.1 564.2 L509.5 565.4 L510.0 567.2 L510.5 569.1 L511.0 569.8 L511.5 572.0 L512.0 574.0 L512.1 574.2 L512.5 574.8 L513.0 576.9 L513.5 578.5 L514.0 579.5 L514.0 579.7 L514.5 578.6 L515.0 578.3 L515.5 577.7 L516.0 576.2 L516.5 576.4 L516.9 576.4 L517.0 576.3 L517.5 577.0 L518.0 577.5 L518.5 579.1 L518.9 579.6 L519.0 578.4 L519.5 574.6 L520.0 568.9 L520.5 565.4 L520.8 561.2 L521.0 561.0 L521.5 557.3 L522.0 553.4 L522.5 550.7 L522.8 548.3 L523.0 549.1 L523.5 551.1 L524.0 551.5 L524.5 552.6 L524.8 553.8 L525.0 554.3 L525.5 553.4 L526.0 553.2 L526.5 554.2 L527.0 553.6 L527.5 553.1 L527.7 553.8 L528.0 552.9 L528.5 553.6 L529.0 553.0 L529.5 553.5 L530.0 554.2 L530.5 554.5 L531.0 554.6 L531.5 553.9 L531.6 554.2 L532.0 554.0 L532.5 553.8 L533.0 554.6 L533.5 555.3 L534.0 555.5 L534.5 555.4 L535.0 555.5 L535.5 554.1 L536.0 553.6 L536.5 553.7 L537.0 553.1 L537.4 552.7 L537.5 553.2 L538.0 555.1 L538.5 556.4 L539.0 557.6 L539.5 559.9 L540.0 561.6 L540.4 561.8 L540.5 561.4 L541.0 562.0 L541.5 564.0 L542.0 563.4 L542.5 565.1 L543.0 565.6 L543.3 565.5 L543.5 566.7 L544.0 566.5 L544.5 567.7 L545.0 569.2 L545.2 569.0 L545.5 569.7 L546.0 567.8 L546.5 566.6 L547.0 565.4 L547.5 565.4 L548.0 564.1 L548.1 564.1 L548.5 564.4 L549.0 564.9 L549.5 565.5 L550.0 565.4 L550.5 565.0 L551.0 565.7 L551.1 565.3 L551.5 564.8 L552.0 565.2 L552.5 565.2 L553.0 564.0 L553.5 563.8 L554.0 563.6 L554.5 562.7 L555.0 560.9 L555.5 559.6 L556.0 558.4 L556.0 557.8 L556.5 558.3 L557.0 558.3 L557.5 556.8 L558.0 558.0 L558.5 557.5 L558.9 556.5 L559.0 558.0 L559.5 562.5 L560.0 567.2 L560.5 570.6 L560.8 573.7 L561.0 573.4 L561.5 571.0 L562.0 568.9 L562.5 565.8 L563.0 563.7 L563.5 560.7 L563.8 560.3 L564.0 560.6 L564.5 560.7 L565.0 561.1 L565.5 560.7 L566.0 562.1 L566.5 562.6 L566.7 562.7 L567.0 561.6 L567.5 561.3 L568.0 559.9 L568.5 560.1 L569.0 559.4 L569.5 557.9 L569.6 557.4 L570.0 558.7 L570.5 559.9 L571.0 561.2 L571.5 561.8 L572.0 562.1 L572.5 564.3 L572.5 563.2 L573.0 567.9 L573.5 570.6 L574.0 574.6 L574.5 579.1 L574.9 580.8 L575.0 581.5 L575.5 584.6 L576.0 587.4 L576.0 587.8 L576.5 579.1 L577.0 570.2 L577.4 561.9 L577.5 563.1 L578.0 564.2 L578.5 566.9 L579.0 569.9 L579.4 571.3 L579.5 571.9 L580.0 571.3 L580.5 570.6 L581.0 570.6 L581.3 569.8 L581.5 569.4 L582.0 569.5 L582.5 570.3 L583.0 570.4 L583.5 569.3 L584.0 570.3 L584.2 570.5 L584.5 569.5 L585.0 569.1 L585.5 568.0 L586.0 568.0 L586.2 567.8 L586.5 568.6 L587.0 568.6 L587.5 571.2 L588.0 571.4 L588.5 572.2 L589.0 573.9 L589.1 573.7 L589.5 574.4 L590.0 575.7 L590.5 575.7 L591.0 577.5 L591.5 578.3 L592.0 580.1 L592.0 580.1 L592.5 578.5 L593.0 578.1 L593.5 576.9 L594.0 576.7 L594.5 576.7 L595.0 576.2 L595.0 575.6 L595.5 576.0 L596.0 576.5 L596.5 577.8 L597.0 579.0 L597.5 578.4 L597.9 579.9 L598.0 578.3 L598.5 576.5 L599.0 574.6 L599.5 573.3 L600.0 570.7 L600.5 568.8 L600.8 568.0 L601.0 568.3 L601.5 572.3 L602.0 574.3 L602.5 577.9 L602.8 579.0 L603.0 579.2 L603.5 580.3 L604.0 580.6 L604.5 581.0 L605.0 581.6 L605.5 582.3 L605.7 581.9 L606.0 581.8 L606.5 582.3 L607.0 582.2 L607.5 581.8 L608.0 582.2 L608.5 581.6 L608.6 582.0 L609.0 579.7 L609.5 578.9 L610.0 577.3 L610.5 575.8 L611.0 573.2 L611.5 571.5 L611.5 572.4 L612.0 569.7 L612.5 569.3 L613.0 567.4 L613.5 564.6 L614.0 563.1 L614.5 562.3 L614.5 561.5 L615.0 560.2 L615.5 560.4 L616.0 558.7 L616.5 558.3 L617.0 556.3 L617.4 555.9 L617.5 555.9 L618.0 552.9 L618.5 551.2 L619.0 549.9 L619.5 548.3 L620.0 546.4 L620.3 543.7 L620.5 543.3 L621.0 540.9 L621.5 537.7 L622.0 535.1 L622.5 531.5 L623.0 528.5 L623.2 527.2 L623.5 528.2 L624.0 531.3 L624.5 533.5 L625.0 535.8 L625.2 536.0 L625.5 537.6 L626.0 540.1 L626.5 543.6 L627.0 546.4 L627.1 547.0 L627.5 543.9 L628.0 541.3 L628.5 540.3 L629.0 537.0 L629.1 537.0 L629.5 536.7 L630.0 537.4 L630.5 538.0 L631.0 538.4 L631.0 538.7 L631.5 536.8 L632.0 536.9 L632.5 536.2 L633.0 534.1 L633.5 534.0 L634.0 534.0 L634.5 533.0 L635.0 532.2 L635.0 532.0 L635.5 531.6 L636.0 536.4 L636.5 535.6 L637.0 533.2 L637.5 530.8 L637.9 529.4 L638.0 528.4 L638.5 525.8 L639.0 523.9 L639.2 522.8 L639.5 521.9 L639.8 519.9 L640.0 518.0 L640.5 516.3 L641.0 513.3 L641.5 510.6 L641.8 509.2 L642.0 507.2 L642.4 505.8 L642.5 505.1 L643.0 501.1 L643.5 497.6 L643.7 495.9 L644.0 493.3 L644.5 490.2 L644.8 486.9 L645.0 488.5 L645.5 491.8 L645.7 492.0 L646.0 494.6 L646.4 497.4 L646.5 498.0 L647.0 500.4 L647.2 502.7 L647.5 501.7 L648.0 500.1 L648.5 499.7 L648.6 499.3 L648.8 498.9 L649.0 498.2 L649.5 498.2 L650.0 496.6 L650.4 495.9 L650.5 496.0 L651.0 496.4 L651.2 494.8 L651.5 495.8 L651.5 496.0 L652.0 495.2 L652.5 495.4 L653.0 494.9 L653.5 495.1 L653.6 495.4 L654.0 486.7 L654.5 485.6 L655.0 485.3 L655.5 483.4 L656.0 482.0 L656.0 482.7 L656.5 481.1 L657.0 480.8 L657.5 479.2 L658.0 478.5 L658.4 476.5 L658.5 477.8 L659.0 480.4 L659.5 481.6 L660.0 485.4 L660.5 486.5 L660.8 485.6 L661.0 486.7 L661.5 484.2 L661.6 483.8 L662.0 480.5 L662.5 478.9 L663.0 475.1 L663.2 474.0 L663.5 472.6 L664.0 469.5 L664.5 466.7 L665.0 464.6 L665.5 461.8 L665.6 460.9 L666.0 465.5 L666.5 469.9 L667.0 474.4 L667.2 476.8 L667.5 479.5 L668.0 484.7 L668.5 482.9 L669.0 479.7 L669.5 477.8 L669.6 477.1 L670.0 473.8 L670.4 473.2 L670.5 472.8 L671.0 470.1 L671.5 470.1 L672.0 468.0 L672.5 466.8 L672.8 466.8 L673.0 463.6 L673.5 459.0 L674.0 454.7 L674.4 450.4 L674.5 449.8 L675.0 450.0 L675.5 449.0 L676.0 448.0 L676.5 446.6 L676.8 447.0 L677.0 442.7 L677.5 432.3 L677.9 423.7 L678.0 424.4 L678.5 423.4 L679.0 423.5 L679.5 423.5 L680.0 422.7 L680.5 419.9 L681.0 417.9 L681.5 415.2 L681.6 415.2 L682.0 414.0 L682.5 413.8 L683.0 412.7 L683.2 412.0 L683.5 405.9 L684.0 397.0 L684.5 389.8 L684.5 389.8 L685.0 392.9 L685.5 395.8 L685.9 398.4 L686.0 400.0 L686.5 405.4 L687.0 411.1 L687.2 413.4 L687.5 413.6 L688.0 412.7 L688.5 412.8 L688.8 414.0 L689.0 416.5 L689.5 422.9 L690.0 428.1 L690.4 433.3 L690.5 433.7 L691.0 434.3 L691.5 434.9 L692.0 434.4 L692.5 435.5 L692.8 434.9 L693.0 435.3 L693.5 437.3 L694.0 438.1 L694.4 439.0 L694.5 440.6 L695.0 450.8 L695.2 454.3 L695.5 456.0 L696.0 459.2 L696.5 461.8 L696.8 462.1 L697.0 463.0 L697.5 466.1 L698.0 467.8 L698.5 470.0 L699.0 471.1 L699.2 472.3 L699.5 473.8 L700.0 477.7 L700.5 480.0 L700.8 482.2 L701.0 484.4 L701.5 487.3 L701.6 497.3 L702.0 498.4 L702.4 499.5 L702.5 498.9 L703.0 499.8 L703.5 500.4 L704.0 485.8 L704.5 480.3 L705.0 476.1 L705.5 472.6 L705.6 471.6 L706.0 468.6 L706.1 467.3 L706.5 469.4 L707.0 470.0 L707.5 471.9 L708.0 474.3 L708.5 475.8 L709.0 478.7 L709.5 481.9 L709.6 482.3 L710.0 482.7 L710.5 483.8 L711.0 485.5 L711.2 486.6 L711.5 486.9 L712.0 485.4 L712.5 486.1 L713.0 483.2 L713.5 481.1 L714.0 478.4 L714.4 476.3 L714.5 475.8 L715.0 477.7 L715.5 478.2 L716.0 479.6 L716.5 481.0 L716.8 482.7 L717.0 490.1 L717.5 492.4 L718.0 495.9 L718.4 498.6 L718.5 499.0 L719.0 501.0 L719.5 503.0 L720.0 504.7 L720.5 507.3 L721.0 509.7 L721.5 511.3 L721.6 512.1 L722.0 511.2 L722.5 509.9 L723.0 510.1 L723.5 509.7 L724.0 508.1 L724.5 506.6 L725.0 506.4 L725.5 505.5 L726.0 504.5 L726.4 504.3 L726.5 504.2 L727.0 506.5 L727.5 507.3 L728.0 510.1 L728.5 512.5 L728.8 512.5 L729.0 512.9 L729.5 515.0 L730.0 516.2 L730.5 515.9 L731.0 517.8 L731.5 518.0 L732.0 520.0 L732.5 520.2 L733.0 519.9 L733.5 520.2 L734.0 521.4 L734.4 521.2 L734.5 521.8 L735.0 522.2 L735.5 523.1 L736.0 525.1 L736.5 525.7 L736.8 526.0 L737.0 526.6 L737.5 528.2 L738.0 529.5 L738.5 531.2 L739.0 531.7 L739.2 532.9 L739.5 530.1 L740.0 526.0 L740.5 521.6 L741.0 517.3 L741.5 513.1 L741.6 512.3 L742.0 510.0 L742.5 507.4 L743.0 505.4 L743.5 503.2 L744.0 500.3 L744.5 501.3 L745.0 501.8 L745.5 503.8 L746.0 505.2 L746.4 505.0 L746.5 505.1 L747.0 507.1 L747.5 509.5 L748.0 511.3 L748.5 514.4 L749.0 514.9 L749.5 517.3 L749.6 517.4 L750.0 517.0 L750.5 515.7 L751.0 513.3 L751.5 511.6 L752.0 510.7 L752.5 509.4 L752.8 509.1 L753.0 507.5 L753.5 507.1 L754.0 506.7 L754.5 506.2 L755.0 505.8 L755.5 506.0 L756.0 505.4 L756.5 500.8 L757.0 496.7 L757.5 492.8 L757.6 491.9 L758.0 489.6 L758.4 485.7 L758.5 486.6 L759.0 489.7 L759.5 491.8 L760.0 494.2 L760.5 497.8 L760.8 499.5 L761.0 497.9 L761.5 496.5 L762.0 495.5 L762.4 493.4 L762.5 492.7 L763.0 490.7 L763.2 491.5 L763.5 492.9 L764.0 494.9 L764.5 497.8 L765.0 500.4 L765.5 502.7 L765.6 504.4 L766.0 505.3 L766.5 506.3 L767.0 507.7 L767.5 510.2 L768.0 511.8 L768.5 514.2 L768.8 515.1 L769.0 515.0 L769.5 514.3 L770.0 514.3 L770.5 514.5 L771.0 514.4 L771.5 515.4 L772.0 514.8 L772.5 515.8 L773.0 517.1 L773.5 516.7 L774.0 517.9 L774.5 518.0 L775.0 519.7 L775.2 518.8 L775.5 520.5 L776.0 521.2 L776.5 521.8 L777.0 521.3 L777.5 522.3 L777.6 523.1 L778.0 523.8 L778.5 526.4 L779.0 528.3 L779.5 531.1 L780.0 532.5 L780.5 534.3 L781.0 534.8 L781.5 536.9 L782.0 537.6 L782.4 539.5 L782.5 538.1 L783.0 539.0 L783.5 537.8 L784.0 538.1 L784.5 537.8 L785.0 537.0 L785.5 537.8 L785.6 536.9 L786.0 538.5 L786.5 540.1 L787.0 542.5 L787.5 544.7 L788.0 547.1 L788.5 538.2 L789.0 530.4 L789.5 521.2 L790.0 513.3 L790.4 506.7 L790.5 507.1 L791.0 504.9 L791.5 502.6 L792.0 499.6 L792.5 498.2 L793.0 496.7 L793.5 494.0 L793.6 494.1 L794.0 495.3 L794.5 496.2 L795.0 499.5 L795.5 500.8 L796.0 501.5 L796.5 504.7 L797.0 506.7 L797.5 509.3 L798.0 512.1 L798.5 514.2 L799.0 516.7 L799.2 517.8 L799.5 519.5 L800.0 520.8 L800.5 522.7 L801.0 525.6 L801.5 526.9 L802.0 529.9 L802.4 530.9 L802.5 530.7 L803.0 527.8 L803.5 526.4 L804.0 522.9 L804.5 520.8 L805.0 518.5 L805.5 517.1 L805.6 516.7 L806.0 516.4 L806.5 517.4 L807.0 518.8 L807.5 519.1 L808.0 518.9 L808.5 522.2 L809.0 525.1 L809.5 528.0 L810.0 531.5 L810.4 533.3 L810.5 535.4 L811.0 538.3 L811.5 542.1 L812.0 546.0 L812.5 549.8 L812.8 552.1 L813.0 550.9 L813.5 549.5 L814.0 548.3 L814.5 546.3 L815.0 545.6 L815.2 545.5 L815.5 543.0 L816.0 537.7 L816.5 532.5 L817.0 527.4 L817.5 521.4 L817.6 520.9 L818.0 517.7 L818.5 514.2 L819.0 509.4 L819.5 505.8 L820.0 502.0 L820.5 502.0 L821.0 501.5 L821.5 500.7 L822.0 499.5 L822.5 499.9 L823.0 499.6 L823.2 498.9 L823.5 500.0 L824.0 502.5 L824.5 504.3 L825.0 507.5 L825.5 510.3 L825.6 510.0 L826.0 506.6 L826.5 502.1 L827.0 487.0 L827.5 486.8 L828.0 484.9 L828.5 482.9 L829.0 481.4 L829.5 480.3 L829.6 480.5 L830.0 482.6 L830.5 484.3 L831.0 487.6 L831.2 487.6 L831.5 499.1 L832.0 496.6 L832.5 496.0 L833.0 492.6 L833.5 487.0 L834.0 484.7 L834.4 483.3 L834.5 482.9 L835.0 480.7 L835.2 481.1 L835.5 480.9 L836.0 480.1 L836.5 479.3 L837.0 478.0 L837.5 478.6 L838.0 477.3 L838.4 477.8 L838.5 477.0 L839.0 478.5 L839.5 479.9 L840.0 479.9 L840.5 481.5 L841.0 481.7 L841.5 482.7 L841.6 483.1 L842.0 485.2 L842.4 485.9 L842.5 485.8 L843.0 486.7 L843.5 492.6 L844.0 494.4 L844.5 498.3 L845.0 503.1 L845.5 508.0 L845.6 507.6 L846.0 507.3 L846.5 507.0 L847.0 505.7 L847.5 505.4 L848.0 504.9 L848.4 503.7 L848.5 504.1 L848.8 503.2 L849.0 504.8 L849.5 507.1 L850.0 510.2 L850.5 511.9 L851.0 515.6 L851.2 515.8 L851.5 515.7 L852.0 512.8 L852.4 510.8 L852.5 510.2 L853.0 508.2 L853.5 506.0 L853.6 505.6 L854.0 509.6 L854.5 514.2 L854.8 518.0 L855.0 519.7 L855.5 524.8 L856.0 529.1 L856.4 530.1 L856.5 530.4 L857.0 531.6 L857.5 531.7 L858.0 532.4 L858.5 532.9 L858.8 534.0 L859.0 532.0 L859.5 529.0 L860.0 527.4 L860.5 525.0 L861.0 522.0 L861.2 520.8 L861.5 522.6 L862.0 524.6 L862.5 527.7 L863.0 529.5 L863.5 532.3 L863.6 533.3 L864.0 531.0 L864.5 527.8 L865.0 524.3 L865.5 522.3 L866.0 519.0 L866.5 520.9 L867.0 523.4 L867.5 525.8 L868.0 527.9 L868.4 529.5 L868.5 530.7 L869.0 530.1 L869.5 529.0 L870.0 528.7 L870.5 527.3 L870.8 527.5 L871.0 525.8 L871.5 524.6 L872.0 522.3 L872.5 520.8 L873.0 517.6 L873.2 517.9 L873.5 516.5 L874.0 516.7 L874.5 516.8 L875.0 514.8 L875.5 514.7 L876.0 514.3 L876.4 513.9 L876.5 513.7 L877.0 516.0 L877.5 516.9 L878.0 517.2 L878.5 518.2 L878.8 519.1 L879.0 518.7 L879.5 519.6 L880.0 522.0 L880.5 522.1 L881.0 523.4 L881.2 524.5 L881.5 523.6 L882.0 521.1 L882.5 519.0 L883.0 517.5 L883.5 516.8 L883.6 516.4 L884.0 516.9 L884.5 519.9 L885.0 521.2 L885.5 523.4 L886.0 524.9 L886.5 525.8 L887.0 525.7 L887.5 524.2 L888.0 524.6 L888.5 523.7 L889.0 524.5 L889.2 523.1 L889.5 521.1 L890.0 518.6 L890.5 514.4 L890.8 513.2 L891.0 511.4 L891.5 506.6 L892.0 501.2 L892.4 498.5 L892.5 498.6 L893.0 496.3 L893.5 494.2 L894.0 493.0 L894.5 491.6 L895.0 490.7 L895.5 488.4 L895.6 488.1 L896.0 485.2 L896.5 482.3 L897.0 478.8 L897.5 474.5 L897.6 474.4 L898.0 471.6 L898.5 473.5 L899.0 475.2 L899.5 477.7 L899.8 479.9 L900.0 480.6 L900.4 481.8 L900.5 483.2 L901.0 486.3 L901.5 491.8 L902.0 494.9 L902.5 499.0 L902.8 501.4 L903.0 498.9 L903.5 495.5 L904.0 490.7 L904.5 486.3 L904.9 483.8 L905.0 481.7 L905.2 480.3 L905.5 480.7 L906.0 479.4 L906.5 478.9 L907.0 478.9 L907.5 477.8 L908.0 478.4 L908.4 478.2 L908.5 477.0 L909.0 479.3 L909.3 480.7 L909.5 480.9 L910.0 483.4 L910.5 484.4 L910.8 484.9 L911.0 484.7 L911.5 482.8 L912.0 480.4 L912.5 478.9 L912.9 477.3 L913.0 476.6 L913.2 475.8 L913.5 467.7 L914.0 463.8 L914.5 459.9 L915.0 456.9 L915.5 452.0 L915.6 452.2 L916.0 448.3 L916.2 447.3 L916.4 447.2 L916.5 447.9 L917.0 450.1 L917.3 451.3 L917.5 453.5 L918.0 459.6 L918.5 467.0 L918.8 481.8 L919.0 481.1 L919.5 478.0 L920.0 474.3 L920.4 472.8 L920.5 473.3 L921.0 474.8 L921.5 469.1 L921.7 467.8 L922.0 467.4 L922.5 466.4 L923.0 466.4 L923.5 465.6 L923.6 465.4 L924.0 464.5 L924.5 464.6 L924.7 463.3 L925.0 466.0 L925.5 467.4 L926.0 469.4 L926.5 467.4 L927.0 468.8 L927.5 471.0 L927.6 471.7 L928.0 473.2 L928.4 475.5 L928.5 475.5 L929.0 468.6 L929.2 467.2 L929.5 466.2 L930.0 462.9 L930.5 461.6 L930.5 460.5 L930.8 460.7 L931.0 460.7 L931.5 461.8 L932.0 462.3 L932.5 462.4 L933.0 461.5 L933.4 462.3 L933.5 462.5 L934.0 464.2 L934.5 467.4 L935.0 468.0 L935.5 471.2 L935.6 472.1 L936.0 473.6 L936.4 466.9 L936.5 466.9 L937.0 464.8 L937.2 462.7 L937.5 461.5 L937.8 460.9 L938.0 459.1 L938.5 457.9 L938.8 456.7 L939.0 456.3 L939.5 454.0 L940.0 452.3 L940.0 453.7 L940.4 452.3 L940.5 451.9 L941.0 449.6 L941.5 448.1 L942.0 447.1 L942.2 445.9 L942.5 445.3 L943.0 444.2 L943.5 441.5 L943.6 441.1 L944.0 440.6 L944.4 438.5 L944.5 437.6 L945.0 438.3 L945.5 438.8 L946.0 438.0 L946.5 438.6 L947.0 439.3 L947.4 439.6 L947.5 438.9 L948.0 438.4 L948.4 436.9 L948.5 436.6 L949.0 436.3 L949.5 434.5 L950.0 434.2 L950.3 432.7 L950.5 432.1 L950.8 417.7 L951.0 417.1 L951.5 413.5 L952.0 410.5 L952.5 407.5 L953.0 404.9 L953.2 403.5 L953.2 403.7 L953.5 405.0 L954.0 405.2 L954.5 406.1 L955.0 405.7 L955.5 431.6 L955.6 431.6 L956.0 434.2 L956.5 435.8 L956.9 437.2 L957.0 436.5 L957.2 436.4 L957.5 435.9 L958.0 435.0 L958.5 434.8 L959.0 433.4 L959.5 431.7 L959.6 431.6 L960.0 419.0 L960.0 420.2 L960.5 419.0 L961.0 419.3 L961.5 418.9 L962.0 418.9 L962.5 415.1 L963.0 413.2 L963.5 411.0 L964.0 408.2 L964.4 407.6 L964.5 407.2 L965.0 410.2 L965.5 412.2 L966.0 413.8 L966.5 416.6 L966.8 417.8 L967.0 419.3 L967.5 424.2 L968.0 429.6 L968.5 433.3 L969.0 438.4 L969.2 440.5 L969.5 439.1 L970.0 435.8 L970.5 434.0 L971.0 430.6 L971.5 428.7 L971.6 428.1 L972.0 425.9 L972.5 424.3 L973.0 422.8 L973.5 421.8 L974.0 419.6 L974.5 420.6 L975.0 422.4 L975.5 422.4 L976.0 423.5 L976.4 424.4 L976.5 424.5 L977.0 426.3 L977.5 428.2 L978.0 431.2 L978.5 433.1 L978.8 434.7 L979.0 436.8 L979.5 440.4 L980.0 445.7 L980.5 450.7 L981.0 454.3 L981.2 471.3 L981.5 474.3 L982.0 479.7 L982.5 484.6 L982.8 486.6 L983.0 485.7 L983.5 481.2 L984.0 478.1 L984.5 474.4 L985.0 470.2 L985.2 469.2 L985.5 470.5 L986.0 473.0 L986.5 474.9 L987.0 477.0 L987.5 479.6 L988.0 482.0 L988.4 483.3 L988.5 484.8 L989.0 487.6 L989.5 490.8 L990.0 494.7 L990.5 498.4 L991.0 501.4 L991.5 505.6 L991.6 506.5 L992.0 503.3 L992.5 499.8 L993.0 494.9 L993.5 491.8 L994.0 488.0 L994.5 483.8 L994.8 482.0 L995.0 483.4 L995.5 488.8 L996.0 493.7 L996.5 498.3 L997.0 502.8 L997.5 507.5 L998.0 511.8 L998.5 507.7 L999.0 503.9 L999.5 498.7 L1000.0 493.6 L1000.4 490.5 L1000.5 489.0 L1001.0 486.2 L1001.5 483.1 L1002.0 480.3 L1002.5 476.0 L1002.8 474.3 L1003.0 477.9 L1003.5 485.1 L1004.0 492.4 L1004.4 498.4 L1004.5 498.5 L1005.0 500.9 L1005.5 503.0 L1006.0 506.2 L1006.5 508.6 L1006.8 509.2 L1007.0 509.0 L1007.5 504.9 L1008.0 502.4 L1008.5 500.3 L1009.0 497.4 L1009.2 496.4 L1009.5 497.4 L1010.0 496.0 L1010.5 496.1 L1011.0 496.2 L1011.5 496.9 L1011.6 496.2 L1012.0 498.2 L1012.5 502.1 L1013.0 504.8 L1013.5 507.6 L1014.0 511.0 L1014.5 509.2 L1015.0 507.1 L1015.5 505.2 L1016.0 503.1 L1016.4 501.9 L1016.5 502.0 L1017.0 500.3 L1017.5 499.7 L1018.0 499.9 L1018.5 498.3 L1018.8 498.5 L1019.0 499.7 L1019.5 502.7 L1020.0 506.1 L1020.5 508.9 L1021.0 510.9 L1021.2 512.8 L1021.5 515.4 L1022.0 520.2 L1022.5 524.5 L1023.0 529.1 L1023.5 534.5 L1023.6 535.1 L1024.0 534.0 L1024.5 533.4 L1025.0 532.9 L1025.5 532.0 L1026.0 531.8 L1026.5 526.7 L1027.0 522.1 L1027.5 517.6 L1027.6 516.8 L1028.0 520.4 L1028.5 522.8 L1029.0 526.7 L1029.5 530.5 L1030.0 533.4 L1030.5 530.2 L1031.0 528.7 L1031.5 526.0 L1032.0 522.0 L1032.4 520.2 L1032.5 520.3 L1033.0 519.1 L1033.5 516.8 L1034.0 515.6 L1034.5 513.2 L1034.8 512.9 L1035.0 513.7 L1035.5 517.0 L1036.0 521.0 L1036.5 524.5 L1037.0 527.8 L1037.2 528.7 L1037.5 526.5 L1038.0 523.7 L1038.5 520.3 L1039.0 517.4 L1039.5 514.1 L1040.0 509.8 L1040.4 507.6 L1040.5 508.1 L1041.0 507.7 L1041.5 507.8 L1042.0 507.8 L1042.5 509.0 L1043.0 509.8 L1043.5 510.1 L1043.6 508.8 L1044.0 508.5 L1044.5 506.6 L1045.0 505.4 L1045.2 504.4 L1045.5 507.1 L1046.0 510.2 L1046.5 511.7 L1047.0 515.7 L1047.5 517.8 L1047.6 518.3 L1048.0 521.9 L1048.5 526.6 L1049.0 531.0 L1049.5 533.6 L1050.0 537.9 L1050.5 536.7 L1051.0 536.8 L1051.5 535.9 L1052.0 535.0 L1052.5 534.1 L1053.0 534.2 L1053.2 533.9 L1053.5 529.9 L1054.0 524.7 L1054.5 519.7 L1055.0 514.6 L1055.5 509.6 L1055.6 507.6 L1056.0 512.1 L1056.5 516.9 L1057.0 522.3 L1057.5 526.2 L1058.0 531.3 L1058.4 529.3 L1058.5 530.2 L1059.0 526.7 L1059.5 524.8 L1060.0 521.9 L1060.4 520.3 L1060.5 520.3 L1060.8 522.6 L1061.0 522.9 L1061.5 526.1 L1062.0 527.9 L1062.5 530.2 L1063.0 533.1 L1063.2 533.8 L1063.5 535.1 L1064.0 537.2 L1064.4 539.1 L1064.5 540.2 L1065.0 538.3 L1065.5 536.9 L1065.6 536.9 L1066.0 536.6 L1066.5 536.1 L1067.0 535.3 L1067.5 536.9 L1068.0 536.8 L1068.5 537.2 L1068.8 538.1 L1069.0 538.5 L1069.5 540.6 L1070.0 544.1 L1070.5 546.9 L1071.0 549.5 L1071.2 550.0 L1071.5 552.7 L1072.0 555.3 L1072.5 558.1 L1073.0 559.9 L1073.5 563.2 L1073.6 563.6 L1074.0 561.5 L1074.5 559.7 L1075.0 558.5 L1075.5 556.9 L1076.0 555.3 L1076.5 554.3 L1076.8 554.0 L1077.0 554.1 L1077.5 556.4 L1078.0 557.6 L1078.5 559.9 L1079.0 563.1 L1079.5 563.6 L1080.0 566.4 L1080.5 570.4 L1081.0 573.9 L1081.5 577.3 L1081.6 577.4 L1082.0 577.5 L1082.5 576.8 L1083.0 575.9 L1083.5 575.5 L1084.0 573.4 L1084.5 574.0 L1084.8 572.6 L1085.0 572.9 L1085.5 571.5 L1086.0 571.9 L1086.5 569.8 L1087.0 570.0 L1087.2 569.2 L1087.5 566.8 L1088.0 562.5 L1088.5 558.6 L1089.0 554.5 L1089.5 549.5 L1089.6 549.0 L1090.0 535.4 L1090.4 502.0 L1090.5 502.2 L1091.0 497.3 L1091.2 495.4 L1091.5 493.3 L1092.0 490.0 L1092.5 489.5 L1093.0 490.7 L1093.5 490.7 L1093.6 491.0 L1094.0 490.4 L1094.4 490.6 L1094.5 490.7 L1095.0 491.4 L1095.5 491.8 L1096.0 491.5 L1096.5 492.6 L1096.8 492.6 L1097.0 494.9 L1097.5 501.3 L1098.0 507.9 L1098.4 511.5 L1098.5 512.5 L1099.0 510.9 L1099.5 510.9 L1100.0 509.2 L1100.5 510.0 L1100.8 508.7 L1101.0 510.6 L1101.5 512.1 L1102.0 515.1 L1102.5 518.2 L1103.0 516.9 L1103.2 517.2 L1103.5 518.2 L1104.0 519.1 L1104.5 521.4 L1105.0 524.6 L1105.5 528.2 L1106.0 532.5 L1106.4 533.8 L1106.5 535.8 L1107.0 541.4 L1107.5 547.8 L1108.0 553.1 L1108.5 553.3 L1109.0 553.2 L1109.5 552.7 L1110.0 551.8 L1110.5 551.1 L1111.0 550.7 L1111.2 549.8 L1111.5 550.3 L1112.0 549.1 L1112.5 547.7 L1113.0 547.1 L1113.5 545.7 L1114.0 544.6 L1114.4 543.6 L1114.5 543.9 L1115.0 542.6 L1115.5 541.3 L1116.0 539.3 L1116.5 539.0 L1117.0 537.4 L1117.5 536.4 L1117.6 536.2 L1118.0 523.9 L1118.4 511.4 L1118.5 512.3 L1119.0 515.2 L1119.5 516.8 L1120.0 517.6 L1120.5 520.6 L1120.8 522.4 L1121.0 522.1 L1121.5 524.6 L1122.0 525.2 L1122.5 528.3 L1123.0 529.3 L1123.5 530.6 L1124.0 533.3 L1124.5 535.7 L1125.0 538.8 L1125.5 541.3 L1126.0 543.9 L1126.4 545.6 L1126.5 546.2 L1127.0 543.7 L1127.5 544.0 L1128.0 542.7 L1128.5 541.0 L1128.8 541.3 L1129.0 541.5 L1129.5 543.7 L1130.0 546.2 L1130.5 547.1 L1131.0 549.2 L1131.2 550.6 L1131.5 551.2 L1132.0 554.5 L1132.5 557.4 L1133.0 559.4 L1133.5 561.5 L1134.0 564.9 L1134.4 567.0 L1134.5 566.2 L1135.0 562.9 L1135.5 560.4 L1136.0 557.3 L1136.5 553.2 L1136.8 551.8 L1137.0 551.8 L1137.5 552.7 L1138.0 554.2 L1138.5 556.0 L1139.0 556.9 L1139.5 556.8 L1140.0 557.9 L1140.5 554.6 L1141.0 551.6 L1141.5 547.6 L1142.0 544.4 L1142.4 540.1 L1142.5 541.4 L1143.0 539.4 L1143.5 539.4 L1144.0 539.0 L1144.5 538.0 L1145.0 536.4 L1145.5 536.4 L1145.6 535.9 L1146.0 538.2 L1146.5 542.3 L1147.0 546.0 L1147.5 550.1 L1148.0 553.2 L1148.5 552.1 L1149.0 550.6 L1149.5 548.1 L1150.0 546.3 L1150.4 545.9 L1150.5 545.0 L1151.0 541.8 L1151.5 539.1 L1152.0 537.8 L1152.5 534.6 L1152.8 532.6 L1153.0 532.4 L1153.5 533.9 L1154.0 533.7 L1154.5 534.0 L1155.0 533.7 L1155.5 533.8 L1156.0 534.3 L1156.5 536.5 L1157.0 539.9 L1157.5 542.3 L1158.0 545.6 L1158.4 547.1 L1158.5 547.2 L1159.0 547.5 L1159.5 548.5 L1160.0 547.8 L1160.5 548.6 L1161.0 548.1 L1161.5 548.9 L1161.6 548.5 L1162.0 550.6 L1162.5 551.2 L1163.0 553.6 L1163.5 554.8 L1164.0 555.9 L1164.5 558.2 L1164.8 558.2 L1165.0 557.6 L1165.5 554.4 L1166.0 551.1 L1166.5 547.5 L1167.0 545.1 L1167.2 543.7 L1167.5 542.7 L1168.0 541.5 L1168.5 538.5 L1169.0 537.1 L1169.5 535.1 L1170.0 532.4 L1170.5 530.7 L1171.0 528.2 L1171.2 528.6 L1171.5 529.1 L1172.0 531.9 L1172.5 534.2 L1173.0 537.5 L1173.5 540.1 L1174.0 542.1 L1174.4 544.1 L1174.5 543.0 L1175.0 542.5 L1175.5 539.5 L1176.0 538.2 L1176.5 536.4 L1177.0 535.3 L1177.5 533.4 L1177.6 532.6 L1178.0 532.6 L1178.5 531.7 L1179.0 529.2 L1179.5 529.2 L1180.0 528.0 L1180.5 526.8 L1180.8 526.3 L1181.0 526.9 L1181.5 529.5 L1181.6 529.8 L1182.0 532.0 L1182.5 534.0 L1183.0 536.0 L1183.5 537.0 L1184.0 539.7 L1184.5 539.8 L1185.0 540.2 L1185.5 541.0 L1186.0 539.8 L1186.4 540.7 L1186.5 540.3 L1187.0 539.2 L1187.5 537.0 L1188.0 536.8 L1188.5 534.0 L1189.0 532.8 L1189.5 530.9 L1189.6 531.0 L1190.0 530.0 L1190.5 526.9 L1191.0 525.1 L1191.2 515.4 L1191.5 513.6 L1192.0 510.8 L1192.5 507.0 L1192.8 506.1 L1193.0 504.8 L1193.5 501.8 L1194.0 497.8 L1194.4 495.9 L1194.5 494.2 L1195.0 490.6 L1195.2 488.7 L1195.5 485.6 L1196.0 479.2 L1196.5 477.4 L1196.8 476.3 L1197.0 475.4 L1197.5 472.4 L1197.8 472.0 L1198.0 470.3 L1198.4 468.8 L1198.5 466.9 L1199.0 462.7 L1199.2 461.2 L1199.5 459.2 L1199.8 458.5 L1200.0 455.5 L1200.5 450.7 L1200.7 447.3 L1201.0 449.0 L1201.2 449.3 L1201.5 451.3 L1202.0 454.4 L1202.2 455.6 L1202.5 457.8 L1203.0 462.5 L1203.2 485.8 L1203.5 482.8 L1203.7 479.4 L1204.0 476.0 L1204.2 472.6 L1204.5 468.1 L1204.8 464.2 L1205.0 463.6 L1205.1 464.0 L1205.5 460.8 L1206.0 456.9 L1206.5 453.8 L1207.0 451.7 L1207.1 451.0 L1207.2 450.5 L1207.5 448.4 L1208.0 447.0 L1208.2 445.4 L1208.5 444.3 L1209.0 442.6 L1209.5 441.7 L1209.5 441.1 L1210.0 446.9 L1210.4 450.1 L1210.5 451.8 L1211.0 456.7 L1211.0 456.8 L1211.2 452.9 L1211.5 449.9 L1212.0 440.9 L1212.5 434.0 L1212.5 434.0 L1213.0 431.9 L1213.5 429.5 L1214.0 426.4 L1214.2 425.0 L1214.4 424.9 L1214.5 424.4 L1215.0 426.0 L1215.5 428.3 L1215.9 428.8 L1216.0 429.6 L1216.5 432.0 L1216.8 433.5 L1217.0 434.2 L1217.3 435.6 L1217.3 435.9 L1217.5 436.5 L1218.0 441.2 L1218.5 443.5 L1219.0 447.7 L1219.2 449.2 L1219.3 449.5 L1219.3 449.2 L1219.5 449.6 L1220.0 451.3 L1220.5 452.4 L1221.0 453.9 L1221.2 454.1 L1221.5 452.1 L1222.0 446.3 L1222.3 442.2 L1222.4 441.9 L1222.5 441.8 L1222.7 438.1 L1223.0 439.8 L1223.5 441.7 L1224.0 442.0 L1224.5 443.6 L1224.7 443.6 L1224.8 444.6 L1225.0 446.6 L1225.3 449.1 L1225.5 449.9 L1226.0 453.9 L1226.5 457.7 L1226.6 458.8 L1227.0 459.3 L1227.2 460.2 L1227.5 461.6 L1227.6 461.9 L1228.0 456.6 L1228.3 450.9 L1228.5 449.4 L1229.0 441.3 L1229.0 440.5 L1229.5 439.1 L1229.6 437.7 L1230.0 437.3 L1230.5 434.8 L1231.0 431.8 L1231.0 431.9 L1231.4 436.8 L1231.5 438.1 L1232.0 443.4 L1232.5 448.0 L1232.9 453.9 L1233.0 452.4 L1233.5 449.3 L1234.0 445.2 L1234.4 442.7 L1234.4 442.1 L1234.5 440.3 L1234.9 438.6 L1235.0 438.2 L1235.5 437.5 L1236.0 436.0 L1236.5 436.7 L1236.8 435.9 L1236.8 436.3 L1237.0 437.1 L1237.4 437.8 L1237.5 436.6 L1238.0 438.7 L1238.5 439.2 L1238.8 440.3 L1239.0 440.6 L1239.5 443.1 L1240.0 445.4 L1240.3 446.1 L1240.4 448.9 L1240.5 450.6 L1241.0 456.8 L1241.5 458.6 L1241.7 461.5 L1242.0 463.3 L1242.5 466.8 L1243.0 469.9 L1243.2 471.3 L1243.2 471.7 L1243.5 471.2 L1243.5 470.3 L1244.0 467.9 L1244.5 459.4 L1244.7 458.3 L1245.0 457.1 L1245.5 455.8 L1245.5 454.5 L1246.0 453.7 L1246.1 452.5 L1246.4 450.7 L1246.5 451.0 L1247.0 448.9 L1247.5 447.3 L1247.6 447.4 L1248.0 448.7 L1248.5 451.2 L1248.5 450.8 L1249.0 453.8 L1249.0 453.0 L1249.5 459.4 L1249.6 459.7 L1250.0 470.8 L1250.5 466.5 L1250.5 466.7 L1251.0 462.8 L1251.5 459.4 L1252.0 456.1 L1252.5 456.6 L1252.5 456.4 L1253.0 457.3 L1253.5 458.3 L1253.5 457.6 L1254.0 458.5 L1254.4 462.3 L1254.5 462.6 L1255.0 458.6 L1255.5 456.2 L1255.9 453.1 L1256.0 453.5 L1256.5 455.6 L1256.5 455.4 L1257.0 456.2 L1257.3 456.8 L1257.5 456.9 L1258.0 452.7 L1258.5 449.7 L1259.0 445.8 L1259.2 444.7 L1259.3 443.9 L1259.5 446.0 L1260.0 449.4 L1260.5 452.2 L1260.6 452.6 L1261.0 455.3 L1261.2 457.9 L1261.5 455.5 L1262.0 453.1 L1262.4 451.9 L1262.5 450.0 L1262.7 450.0 L1263.0 447.6 L1263.5 444.0 L1264.0 439.9 L1264.2 438.3 L1264.5 437.7 L1264.6 436.9 L1264.8 435.7 L1265.0 433.3 L1265.5 431.4 L1265.6 429.7 L1266.0 432.0 L1266.5 435.8 L1267.0 439.2 L1267.5 441.6 L1267.6 443.2 L1268.0 441.2 L1268.5 439.5 L1268.6 439.0 L1269.0 436.9 L1269.5 434.2 L1270.0 432.9 L1270.0 432.4 L1270.5 431.8 L1271.0 432.7 L1271.5 432.5 L1272.0 431.7 L1272.0 431.7 L1272.5 432.6 L1272.6 433.8 L1273.0 434.2 L1273.5 435.5 L1273.9 436.6 L1274.0 436.5 L1274.5 438.1 L1275.0 438.7 L1275.4 439.5 L1275.5 438.6 L1275.7 437.6 L1276.0 435.1 L1276.4 430.5 L1276.5 430.1 L1277.0 423.6 L1277.3 418.6 L1277.5 418.3 L1278.0 417.9 L1278.5 416.9 L1278.8 416.7 L1279.0 416.9 L1279.5 415.9 L1279.7 414.8 L1280.0 414.0 L1280.5 414.6 L1280.8 413.4 L1281.0 416.6 L1281.5 421.4 L1282.0 427.4 L1282.2 429.9 L1282.5 428.4 L1282.7 427.1 L1283.0 424.0 L1283.5 420.1 L1283.7 418.2 L1284.0 416.2 L1284.5 414.3 L1284.7 411.7 L1285.0 411.3 L1285.2 393.4 L1285.5 376.6 L1286.0 354.7 L1286.5 330.2 L1286.7 320.2 L1287.0 325.4 L1287.5 337.7 L1287.6 338.8 L1288.0 348.5 L1288.3 408.1 L1288.5 411.6 L1288.6 411.9 L1289.0 409.7 L1289.5 408.1 L1289.8 407.5 L1290.0 379.0 L1290.5 385.8 L1290.5 386.1 L1291.0 391.7 L1291.5 397.5 L1291.8 401.6 L1292.0 402.5 L1292.0 403.1 L1292.5 407.5 L1293.0 416.4 L1293.5 423.8 L1293.5 424.8 L1293.8 425.9 L1294.0 427.2 L1294.5 429.2 L1294.9 432.0 L1295.0 430.5 L1295.5 420.4 L1295.8 413.6 L1296.0 408.4 L1296.4 406.0 L1296.5 407.0 L1297.0 411.6 L1297.5 416.0 L1297.8 418.5 L1297.8 418.8 L1298.0 420.0 L1298.5 409.9 L1298.8 413.1 L1298.8 411.8 L1299.0 415.6 L1299.5 424.4 L1300.0 433.3 L1300.3 438.1 L1300.5 438.6 L1300.8 439.7 L1301.0 438.7 L1301.5 440.4 L1302.0 442.1 L1302.2 441.1 L1302.5 443.1 L1303.0 447.8 L1303.2 449.4 L1303.5 446.0 L1303.8 443.8 L1304.0 444.0 L1304.5 440.4 L1304.7 439.0 L1305.0 438.8 L1305.5 438.8 L1306.0 438.5 L1306.1 437.1 L1306.5 440.1 L1307.0 445.3 L1307.5 449.6 L1307.6 450.2 L1307.9 449.7 L1308.0 449.7 L1308.5 450.0 L1309.0 449.8 L1309.1 451.1" fill="none" stroke="#5BA392" stroke-width="5" stroke-linejoin="round" stroke-linecap="round"/>
<text x="429" y="289.7" font-family="Liberation Sans" font-weight="bold" font-size="24.9" fill="#1C365E">FX Spot Rates, Macrobond</text>
<rect x="429" y="713" width="18" height="4" fill="#5BA392"/>
<text x="451.6" y="720.6" font-family="Liberation Sans" font-size="17.4" fill="#333">Norway, NOK per USD</text>
<rect x="640" y="712.7" width="18.5" height="4" fill="#1C365E"/>
<text x="662.8" y="720.4" font-family="Liberation Sans" font-size="17.4" fill="#333">Sweden, SEK per USD</text>
<text transform="translate(1239.1 750.2) scale(1.05 1)" text-anchor="middle" font-family="Liberation Sans" font-size="16.5" fill="#1C365E" stroke="#1C365E" stroke-width="0.25">M</text>
<text transform="translate(1254 750.2) scale(1.1 1)" text-anchor="middle" font-family="Liberation Sans" font-size="16.5" fill="#1C365E" stroke="#1C365E" stroke-width="0.25">A</text>
<text transform="translate(1267.2 750.2) scale(0.95 1)" text-anchor="middle" font-family="Liberation Sans" font-size="16.5" fill="#1C365E" stroke="#1C365E" stroke-width="0.25">C</text>
<text transform="translate(1279.8 750.2) scale(0.9 1)" text-anchor="middle" font-family="Liberation Sans" font-size="16.5" fill="#1C365E" stroke="#1C365E" stroke-width="0.25">R</text>
<text transform="translate(1293.6 750.2) scale(1.05 1)" text-anchor="middle" font-family="Liberation Sans" font-size="16.5" fill="#1C365E" stroke="#1C365E" stroke-width="0.25">O</text>
<text transform="translate(1308.7 750.2) scale(0.95 1)" text-anchor="middle" font-family="Liberation Sans" font-size="16.5" fill="#1C365E" stroke="#1C365E" stroke-width="0.25">B</text>
<text transform="translate(1321.8 750.2) scale(1.05 1)" text-anchor="middle" font-family="Liberation Sans" font-size="16.5" fill="#1C365E" stroke="#1C365E" stroke-width="0.25">O</text>
<text transform="translate(1336.8 750.2) scale(0.92 1)" text-anchor="middle" font-family="Liberation Sans" font-size="16.5" fill="#1C365E" stroke="#1C365E" stroke-width="0.25">N</text>
<text transform="translate(1351.6 750.2) scale(1.0 1)" text-anchor="middle" font-family="Liberation Sans" font-size="16.5" fill="#1C365E" stroke="#1C365E" stroke-width="0.25">D</text>
<path d="M1284.2 735.9 A12.4 12.4 0 0 1 1302.6 735.9 M1284.2 752.5 A12.4 12.4 0 0 0 1302.6 752.5" fill="none" stroke="#1C365E" stroke-width="1.2"/>
<path d="M561.5 618.5 V634 L565 630.5 L568 637 L570.5 636 L567.5 629.5 L572.5 629.5 Z" fill="#fff" stroke="#000" stroke-width="1" stroke-linejoin="round"/>
</svg>
</body></html>
